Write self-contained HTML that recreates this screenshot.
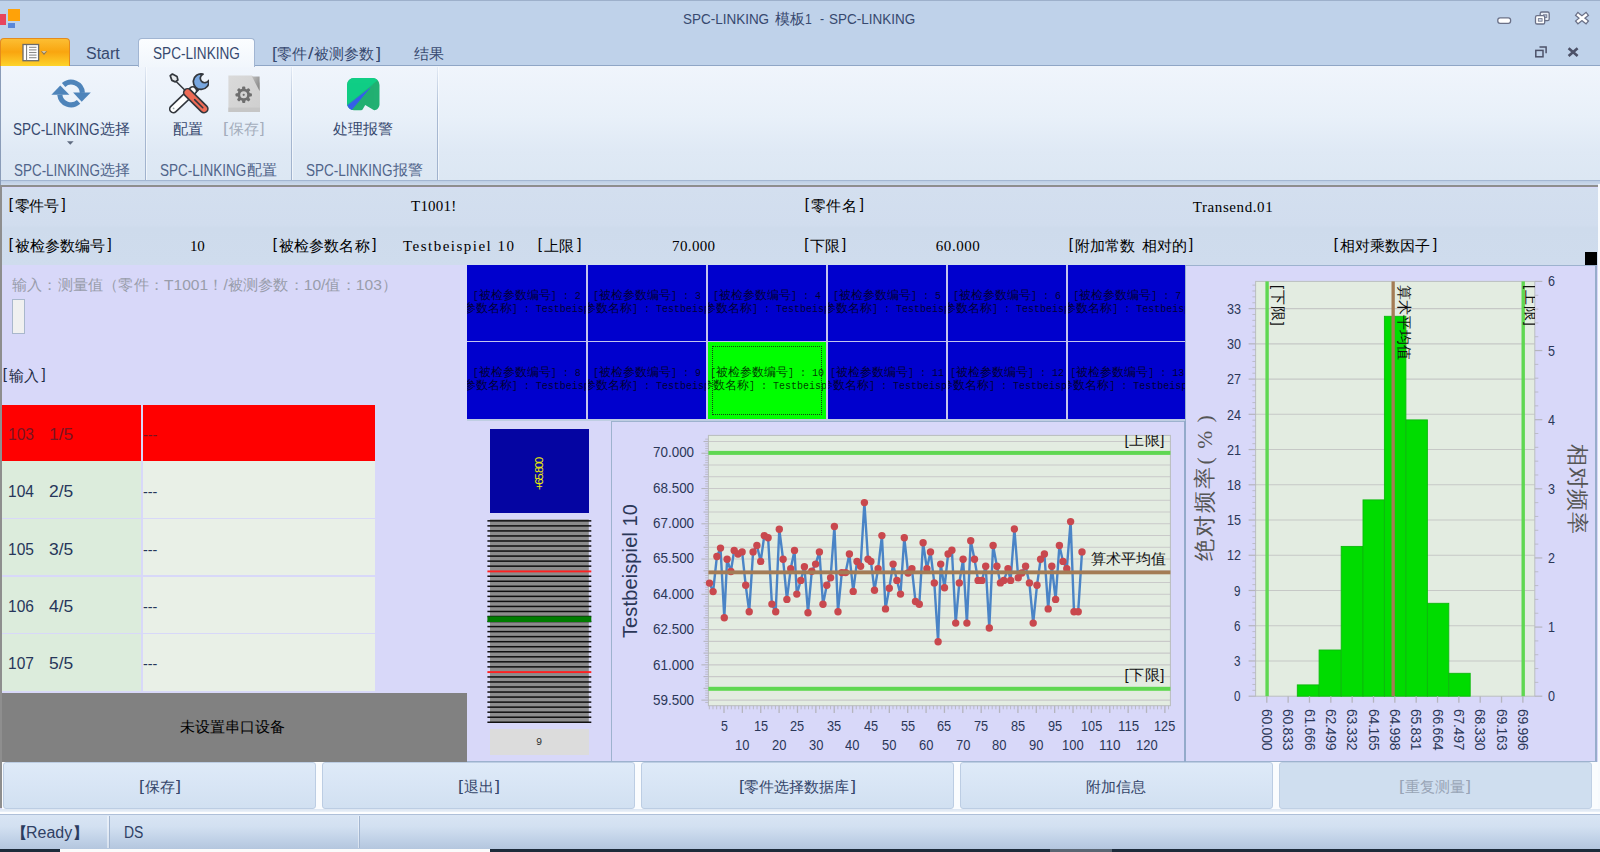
<!DOCTYPE html><html lang="zh"><head><meta charset="utf-8"><title>SPC-LINKING</title><style>
html,body{margin:0;padding:0}
body{width:1600px;height:852px;position:relative;overflow:hidden;background:#D8D8F9;font-family:"Liberation Sans",sans-serif}
.abs{position:absolute}
.t{position:absolute;white-space:nowrap;transform-origin:0 50%;display:block}
.b{position:absolute;box-sizing:border-box}
.cell{position:absolute;overflow:hidden;background:#0000CD;color:rgba(0,0,0,.78);font:10px/13.4px "Liberation Mono",monospace;text-align:center;white-space:nowrap}
.cell b{font-weight:normal;font-size:12px}
.cell div{position:absolute;left:-60px;right:-60px;text-align:center}
.btn{position:absolute;top:762.2px;height:46.9px;width:313px;box-sizing:border-box;border:1px solid #BCCDE3;border-radius:3px;background:linear-gradient(#DEEAF8,#D8E5F5 50%,#D1E0F1)}
.rot{position:absolute;white-space:nowrap;transform-origin:0 0}
</style></head><body>
<div class="b" style="left:0;top:0;width:1600px;height:66px;background:#BFD2EA;border-top:1px solid #9DB0CB"></div>
<div class="b" style="left:0;top:65px;width:1600px;height:116px;border-top:1px solid #8FA6C6;border-bottom:1px solid #A3B6D2;background:linear-gradient(#F0F5FC,#E8F0F9 45%,#DFE9F5 75%,#DCE7F3)"></div>
<div class="b" style="left:0;top:181px;width:1600px;height:5px;background:linear-gradient(#BCCDE4,#D2DEEE)"></div>
<div class="b" style="left:138px;top:38px;width:116.5px;height:28.5px;background:linear-gradient(#FBFDFF,#F1F6FC);border:1px solid #A1B5D2;border-bottom:none;border-radius:4px 4px 0 0"></div>
<div class="b" style="left:0.4px;top:37.6px;width:69.6px;height:28px;border:1.5px solid #E48B1D;border-bottom:none;border-radius:4px 4px 0 0;background:linear-gradient(#FCBE33,#F9A50F 48%,#FBB81C 70%,#FDD42B)"></div>
<svg class="abs" style="left:20px;top:42px" width="32" height="22" viewBox="0 0 32 22"><rect x="3" y="2.5" width="15.6" height="16.2" fill="#fff" stroke="#6A6A6A" stroke-width="1.3"/><line x1="6.6" x2="6.6" y1="3" y2="18.5" stroke="#777" stroke-width="1"/><g stroke="#8A8A8A" stroke-width="1.1"><line x1="9" x2="16.5" y1="5.3" y2="5.3"/><line x1="9" x2="16.5" y1="7.9" y2="7.9"/><line x1="9" x2="16.5" y1="10.5" y2="10.5"/><line x1="9" x2="16.5" y1="13.1" y2="13.1"/><line x1="9" x2="16.5" y1="15.7" y2="15.7"/></g><path d="M20.8 9.3h6.4l-3.2 3.6z" fill="#8C7A58"/><path d="M21.8 9.3h4.4l-2.2 1.6z" fill="#E9DFC9"/></svg>
<div class="b" style="left:7.7px;top:8.7px;width:12.4px;height:12.4px;background:#FFA208"></div><div class="b" style="left:0;top:14px;width:6.1px;height:10.7px;background:#E8455D"></div><div class="b" style="left:7.7px;top:22.6px;width:7.2px;height:5.8px;background:#5A87D8"></div>
<svg class="abs" style="left:1490px;top:8px" width="110" height="56" viewBox="1490 8 110 56">
<rect x="1497.8" y="17.8" width="12.8" height="5.6" rx="2.3" fill="#fff" stroke="#6A7087" stroke-width="1.3"/>
<rect x="1540.2" y="12" width="9" height="8.6" rx="1.6" fill="#E9EEF6" stroke="#6A7087" stroke-width="1.3"/><rect x="1543.4" y="14.8" width="3.4" height="2.6" fill="#B9C3D6" stroke="#6A7087" stroke-width=".8"/>
<rect x="1535.5" y="15.6" width="9.2" height="8.4" rx="1.6" fill="#fff" stroke="#6A7087" stroke-width="1.3"/><rect x="1538.3" y="18.6" width="3.8" height="2.6" fill="#C9D2E2" stroke="#6A7087" stroke-width=".8"/>
<path d="M1578.2 15.1l7.6 6.2M1585.8 15.1l-7.6 6.2" stroke="#6A7087" stroke-width="5" stroke-linecap="square"/><path d="M1578.2 15.1l7.6 6.2M1585.8 15.1l-7.6 6.2" stroke="#fff" stroke-width="2.5" stroke-linecap="square"/>
<rect x="1535.8" y="50.4" width="7.2" height="6.4" fill="none" stroke="#4C5168" stroke-width="1.5"/><path d="M1539.5 47h6.6v6.2" fill="none" stroke="#4C5168" stroke-width="1.5"/>
<path d="M1568.6 48.2l9 7.8M1577.6 48.2l-9 7.8" stroke="#4C5168" stroke-width="2.6"/>
</svg>
<div class="b" style="left:144.5px;top:67px;width:1px;height:113px;background:linear-gradient(rgba(160,178,205,.15),#A9BAD3 40%,#9FB1CC)"></div><div class="b" style="left:145.5px;top:67px;width:1px;height:113px;background:rgba(255,255,255,.55)"></div>
<div class="b" style="left:290.5px;top:67px;width:1px;height:113px;background:linear-gradient(rgba(160,178,205,.15),#A9BAD3 40%,#9FB1CC)"></div><div class="b" style="left:291.5px;top:67px;width:1px;height:113px;background:rgba(255,255,255,.55)"></div>
<div class="b" style="left:437px;top:67px;width:1px;height:113px;background:linear-gradient(rgba(160,178,205,.15),#A9BAD3 40%,#9FB1CC)"></div><div class="b" style="left:438px;top:67px;width:1px;height:113px;background:rgba(255,255,255,.55)"></div>
<svg class="abs" style="left:51px;top:79px" width="40.5" height="29" viewBox="0 0 40.5 29">
<path d="M12.6 6.0A11.3 11.3 0 0 1 31.4 13.9" fill="none" stroke="#4E84BA" stroke-width="5.1"/>
<path d="M22.1 13.4H39.8L30.7 22.8z" fill="#4E84BA"/>
<path d="M9.25 6.4L0.4 15.7H18.4z" fill="#4E84BA"/>
<path d="M8.8 15.7A11.3 11.3 0 0 0 27.6 22.9" fill="none" stroke="#4E84BA" stroke-width="5.1"/>
</svg>
<svg class="abs" style="left:66px;top:140px" width="9" height="6" viewBox="0 0 9 6"><path d="M1 1.2h6.6L4.3 4.8z" fill="#5F6B80"/></svg>
<svg class="abs" style="left:168.6px;top:73.3px" width="40.5" height="41" viewBox="0 0 40.5 41">
<g stroke="#33373D" stroke-width="1.7" stroke-linejoin="round" stroke-linecap="round">
<line x1="6.4" y1="7.8" x2="16" y2="17.2" stroke-width="1.6"/>
<path d="M1.2 2.6L3.4 1l4.6 2.4 .9 3.6-2.6 1.9L2.9 7.4z" fill="#E8ECEF"/>
<path d="M26.2 14.4l-2.6 3.2 2.6 2.4 3-2.8z" fill="#fff"/>
<path d="M23.8 17.6L4.4 36" stroke-width="9"/>
<path d="M23.8 17.6L4.4 36" stroke="#FFFFFF" stroke-width="5.7"/>
<path d="M34 1.1A7.8 7.8 0 1 0 39.8 7.3A4.5 4.5 0 1 1 34 1.1z" fill="#78A7E0"/>
<path d="M18.6 19.6L35 35.8" stroke-width="9.4"/>
<path d="M18.6 19.6L35 35.8" stroke="#EE6B56" stroke-width="6.1"/>
<path d="M25.6 26.6l8.2 8.2" stroke-width="1.5"/>
</g><circle cx="4.6" cy="35.4" r="0.9" fill="#9AA"/></svg>
<svg class="abs" style="left:227.5px;top:74.6px" width="32.5" height="37.5" viewBox="0 0 32.5 37.5">
<defs><linearGradient id="sg" x1="0" y1="0" x2="1" y2="1"><stop offset="0" stop-color="#DADADA"/><stop offset="1" stop-color="#CFCFCF"/></linearGradient><linearGradient id="sf" x1="0" y1="0" x2="1" y2="1"><stop offset="0" stop-color="#BDBDBD"/><stop offset="1" stop-color="#808080"/></linearGradient></defs>
<path d="M.4 .4H24l8 7.6V37H.4z" fill="url(#sg)"/>
<path d="M24 1.6l7.6 0 0 14.4z" fill="url(#sf)"/>
<rect x=".4" y="32.6" width="31.6" height="4.4" fill="#C6C6C6"/>
<g fill="#6E6E6E"><circle cx="15.7" cy="19.8" r="6.2"/>
<g id="tt"><rect x="14.1" y="11.6" width="3.2" height="16.4" rx="1"/></g>
<use href="#tt" transform="rotate(45 15.7 19.8)"/><use href="#tt" transform="rotate(90 15.7 19.8)"/><use href="#tt" transform="rotate(135 15.7 19.8)"/></g>
<circle cx="15.7" cy="19.8" r="3.5" fill="#D2D2D2"/><circle cx="15.7" cy="19.8" r="1.1" fill="#6E6E6E"/>
</svg>
<svg class="abs" style="left:347.4px;top:77.5px" width="33" height="33" viewBox="0 0 33 33">
<defs><clipPath id="gc"><path d="M7 0H25.5a7 7 0 0 1 7 7V26.5c0 3-2.6 5.9-5.4 5.7L18.2 27 15.6 31.6c-.3 .5-.8 .7-1.5 .7H7a7 7 0 0 1-7-7V7a7 7 0 0 1 7-7z"/></clipPath></defs>
<g clip-path="url(#gc)"><rect width="33" height="33" fill="#22B072"/><path d="M0 0H33L30.2 2.4 0.2 27.2z" fill="#10CE85"/><path d="M-0.4 27.4L24.2 8.8 4.6 32.2 0 33z" fill="#3560E8"/><path d="M0 27.2L26 6.4" stroke="#17BF83" stroke-width="1.2" opacity=".6"/></g></svg>
<div class="b" style="left:0;top:185.4px;width:1597.8px;height:2.1px;background:#8E8E8E"></div>
<div class="b" style="left:0;top:185.4px;width:2.4px;height:623px;background:#8E8E8E"></div>
<div class="b" style="left:0;top:66px;width:1px;height:119px;background:#8A9CB8"></div>
<div class="b" style="left:1597.8px;top:184px;width:2.2px;height:630px;background:#F7FAFD"></div>
<div class="b" style="left:2.4px;top:187.5px;width:1595.4px;height:77.6px;background:linear-gradient(#D3DFEF,#D1DDEE 48%,#CEDBEC 52%,#CFDCED)"></div>
<div class="b" style="left:1585.2px;top:252.4px;width:12.3px;height:12.4px;background:#000"></div>
<div class="b" style="left:12.4px;top:299px;width:12.8px;height:34.6px;background:#F0F0F0;border:1px solid #A9B7CC"></div>
<div class="b" style="left:2.4px;top:404.8px;width:138.3px;height:56.5px;background:#FF0000"></div><div class="b" style="left:142.5px;top:404.8px;width:232.7px;height:56.5px;background:#FF0000"></div>
<div class="b" style="left:2.4px;top:461.3px;width:138.3px;height:56.7px;background:#DCECDC"></div><div class="b" style="left:142.5px;top:461.3px;width:232.7px;height:56.7px;background:#E9F0E7"></div>
<div class="b" style="left:2.4px;top:519.4px;width:138.3px;height:55.9px;background:#DCECDC"></div><div class="b" style="left:142.5px;top:519.4px;width:232.7px;height:55.9px;background:#E9F0E7"></div>
<div class="b" style="left:2.4px;top:576.7px;width:138.3px;height:55.9px;background:#DCECDC"></div><div class="b" style="left:142.5px;top:576.7px;width:232.7px;height:55.9px;background:#E9F0E7"></div>
<div class="b" style="left:2.4px;top:634px;width:138.3px;height:57.4px;background:#DCECDC"></div><div class="b" style="left:142.5px;top:634px;width:232.7px;height:57.4px;background:#E9F0E7"></div>
<div class="b" style="left:2.4px;top:693px;width:464.8px;height:69px;background:#818181"></div>
<div class="b" style="left:467.2px;top:265px;width:719.8px;height:153.7px;background:#C4C4EE"></div>
<div class="cell" style="left:467.1px;top:265.0px;width:119.2px;height:75.8px;background:#0000CD"><div style="top:24.7px">[<b>被检参数编号</b>] : 2</div><div style="top:38.3px">[<b>被检参数名称</b>] : Testbeispiel 2</div></div>
<div class="cell" style="left:587.6px;top:265.0px;width:118.7px;height:75.8px;background:#0000CD"><div style="top:24.7px">[<b>被检参数编号</b>] : 3</div><div style="top:38.3px">[<b>被检参数名称</b>] : Testbeispiel 3</div></div>
<div class="cell" style="left:707.6px;top:265.0px;width:118.7px;height:75.8px;background:#0000CD"><div style="top:24.7px">[<b>被检参数编号</b>] : 4</div><div style="top:38.3px">[<b>被检参数名称</b>] : Testbeispiel 4</div></div>
<div class="cell" style="left:827.6px;top:265.0px;width:118.7px;height:75.8px;background:#0000CD"><div style="top:24.7px">[<b>被检参数编号</b>] : 5</div><div style="top:38.3px">[<b>被检参数名称</b>] : Testbeispiel 5</div></div>
<div class="cell" style="left:947.6px;top:265.0px;width:118.7px;height:75.8px;background:#0000CD"><div style="top:24.7px">[<b>被检参数编号</b>] : 6</div><div style="top:38.3px">[<b>被检参数名称</b>] : Testbeispiel 6</div></div>
<div class="cell" style="left:1067.6px;top:265.0px;width:119.4px;height:75.8px;background:#0000CD"><div style="top:24.7px">[<b>被检参数编号</b>] : 7</div><div style="top:38.3px">[<b>被检参数名称</b>] : Testbeispiel 7</div></div>
<div class="cell" style="left:467.1px;top:342.1px;width:119.2px;height:76.6px;background:#0000CD"><div style="top:24.8px">[<b>被检参数编号</b>] : 8</div><div style="top:38.0px">[<b>被检参数名称</b>] : Testbeispiel 8</div></div>
<div class="cell" style="left:587.6px;top:342.1px;width:118.7px;height:76.6px;background:#0000CD"><div style="top:24.8px">[<b>被检参数编号</b>] : 9</div><div style="top:38.0px">[<b>被检参数名称</b>] : Testbeispiel 9</div></div>
<div class="cell" style="left:707.6px;top:342.1px;width:118.7px;height:76.6px;background:#00FF00"><div style="top:24.8px">[<b>被检参数编号</b>] : 10</div><div style="top:38.0px">[<b>被检参数名称</b>] : Testbeispiel 10</div><div style="left:4px;right:4px;top:4px;bottom:4px;border:1px dotted #1a3a1a"></div></div>
<div class="cell" style="left:827.6px;top:342.1px;width:118.7px;height:76.6px;background:#0000CD"><div style="top:24.8px">[<b>被检参数编号</b>] : 11</div><div style="top:38.0px">[<b>被检参数名称</b>] : Testbeispiel 11</div></div>
<div class="cell" style="left:947.6px;top:342.1px;width:118.7px;height:76.6px;background:#0000CD"><div style="top:24.8px">[<b>被检参数编号</b>] : 12</div><div style="top:38.0px">[<b>被检参数名称</b>] : Testbeispiel 12</div></div>
<div class="cell" style="left:1067.6px;top:342.1px;width:119.4px;height:76.6px;background:#0000CD"><div style="top:24.8px">[<b>被检参数编号</b>] : 13</div><div style="top:38.0px">[<b>被检参数名称</b>] : Testbeispiel 13</div></div>
<div class="b" style="left:490px;top:428.6px;width:98.8px;height:84.6px;background:#0505A2"></div>
<div class="rot" style="left:531.6px;top:490.4px;transform:rotate(-90deg);font:11.5px/14px 'Liberation Sans',sans-serif;color:#F2F200;letter-spacing:-1.45px">+65.800</div>
<svg class="abs" style="left:0;top:0" width="1600" height="852" viewBox="0 0 1600 852">
<rect x="490" y="519.4" width="98.8" height="203.6" fill="#8C8C8C"/>
<rect x="487.4" y="520.10" width="103.9" height="1.5" fill="#101010"/>
<rect x="487.4" y="525.13" width="103.9" height="1.5" fill="#101010"/>
<rect x="487.4" y="530.17" width="103.9" height="1.5" fill="#101010"/>
<rect x="487.4" y="535.21" width="103.9" height="1.5" fill="#101010"/>
<rect x="487.4" y="540.24" width="103.9" height="1.5" fill="#101010"/>
<rect x="487.4" y="545.27" width="103.9" height="1.5" fill="#101010"/>
<rect x="487.4" y="550.31" width="103.9" height="1.5" fill="#101010"/>
<rect x="487.4" y="555.35" width="103.9" height="1.5" fill="#101010"/>
<rect x="487.4" y="560.38" width="103.9" height="1.5" fill="#101010"/>
<rect x="487.4" y="565.41" width="103.9" height="1.5" fill="#101010"/>
<rect x="487.4" y="570.45" width="103.9" height="1.9" fill="#FF2020"/>
<rect x="487.4" y="575.49" width="103.9" height="1.5" fill="#101010"/>
<rect x="487.4" y="580.52" width="103.9" height="1.5" fill="#101010"/>
<rect x="487.4" y="585.56" width="103.9" height="1.5" fill="#101010"/>
<rect x="487.4" y="590.59" width="103.9" height="1.5" fill="#101010"/>
<rect x="487.4" y="595.62" width="103.9" height="1.5" fill="#101010"/>
<rect x="487.4" y="600.66" width="103.9" height="1.5" fill="#101010"/>
<rect x="487.4" y="605.70" width="103.9" height="1.5" fill="#101010"/>
<rect x="487.4" y="610.73" width="103.9" height="1.5" fill="#101010"/>
<rect x="487.4" y="615.76" width="103.9" height="1.5" fill="#101010"/>
<rect x="487.4" y="620.80" width="103.9" height="1.5" fill="#101010"/>
<rect x="487.4" y="625.84" width="103.9" height="1.5" fill="#101010"/>
<rect x="487.4" y="630.87" width="103.9" height="1.5" fill="#101010"/>
<rect x="487.4" y="635.90" width="103.9" height="1.5" fill="#101010"/>
<rect x="487.4" y="640.94" width="103.9" height="1.5" fill="#101010"/>
<rect x="487.4" y="645.98" width="103.9" height="1.5" fill="#101010"/>
<rect x="487.4" y="651.01" width="103.9" height="1.5" fill="#101010"/>
<rect x="487.4" y="656.05" width="103.9" height="1.5" fill="#101010"/>
<rect x="487.4" y="661.08" width="103.9" height="1.5" fill="#101010"/>
<rect x="487.4" y="666.12" width="103.9" height="1.5" fill="#101010"/>
<rect x="487.4" y="671.15" width="103.9" height="1.9" fill="#FF2020"/>
<rect x="487.4" y="676.19" width="103.9" height="1.5" fill="#101010"/>
<rect x="487.4" y="681.22" width="103.9" height="1.5" fill="#101010"/>
<rect x="487.4" y="686.25" width="103.9" height="1.5" fill="#101010"/>
<rect x="487.4" y="691.29" width="103.9" height="1.5" fill="#101010"/>
<rect x="487.4" y="696.33" width="103.9" height="1.5" fill="#101010"/>
<rect x="487.4" y="701.36" width="103.9" height="1.5" fill="#101010"/>
<rect x="487.4" y="706.39" width="103.9" height="1.5" fill="#101010"/>
<rect x="487.4" y="711.43" width="103.9" height="1.5" fill="#101010"/>
<rect x="487.4" y="716.47" width="103.9" height="1.5" fill="#101010"/>
<rect x="487.4" y="721.50" width="103.9" height="1.5" fill="#101010"/>
<rect x="487.4" y="616.4" width="103.9" height="5.6" fill="#007C00"/>
</svg>
<div class="b" style="left:490px;top:729.4px;width:98.8px;height:25.8px;background:#DCDCDC"></div>
<div class="b" style="left:467.2px;top:418.7px;width:719.8px;height:2.4px;background:#BFCEE2"></div><div class="b" style="left:467.2px;top:760.7px;width:1129.4px;height:1.6px;background:#9DB2CE"></div><div class="b" style="left:611px;top:421px;width:574.9px;height:341.3px;border:1.6px solid #9DB2CE"></div>
<svg class="abs" style="left:0;top:0" width="1600" height="852" viewBox="0 0 1600 852">
<rect x="708.4" y="435.4" width="462" height="270.3" fill="#E3ECE1"/>
<line x1="708.4" x2="1170.4" y1="441.50" y2="441.50" stroke="#C9C9C9" stroke-width="1.1"/>
<line x1="708.4" x2="1170.4" y1="453.26" y2="453.26" stroke="#C9C9C9" stroke-width="1.1"/>
<line x1="708.4" x2="1170.4" y1="465.01" y2="465.01" stroke="#C9C9C9" stroke-width="1.1"/>
<line x1="708.4" x2="1170.4" y1="476.77" y2="476.77" stroke="#C9C9C9" stroke-width="1.1"/>
<line x1="708.4" x2="1170.4" y1="488.52" y2="488.52" stroke="#C9C9C9" stroke-width="1.1"/>
<line x1="708.4" x2="1170.4" y1="500.28" y2="500.28" stroke="#C9C9C9" stroke-width="1.1"/>
<line x1="708.4" x2="1170.4" y1="512.03" y2="512.03" stroke="#C9C9C9" stroke-width="1.1"/>
<line x1="708.4" x2="1170.4" y1="523.79" y2="523.79" stroke="#C9C9C9" stroke-width="1.1"/>
<line x1="708.4" x2="1170.4" y1="535.54" y2="535.54" stroke="#C9C9C9" stroke-width="1.1"/>
<line x1="708.4" x2="1170.4" y1="547.30" y2="547.30" stroke="#C9C9C9" stroke-width="1.1"/>
<line x1="708.4" x2="1170.4" y1="559.05" y2="559.05" stroke="#C9C9C9" stroke-width="1.1"/>
<line x1="708.4" x2="1170.4" y1="570.81" y2="570.81" stroke="#C9C9C9" stroke-width="1.1"/>
<line x1="708.4" x2="1170.4" y1="582.57" y2="582.57" stroke="#C9C9C9" stroke-width="1.1"/>
<line x1="708.4" x2="1170.4" y1="594.32" y2="594.32" stroke="#C9C9C9" stroke-width="1.1"/>
<line x1="708.4" x2="1170.4" y1="606.08" y2="606.08" stroke="#C9C9C9" stroke-width="1.1"/>
<line x1="708.4" x2="1170.4" y1="617.83" y2="617.83" stroke="#C9C9C9" stroke-width="1.1"/>
<line x1="708.4" x2="1170.4" y1="629.59" y2="629.59" stroke="#C9C9C9" stroke-width="1.1"/>
<line x1="708.4" x2="1170.4" y1="641.34" y2="641.34" stroke="#C9C9C9" stroke-width="1.1"/>
<line x1="708.4" x2="1170.4" y1="653.10" y2="653.10" stroke="#C9C9C9" stroke-width="1.1"/>
<line x1="708.4" x2="1170.4" y1="664.85" y2="664.85" stroke="#C9C9C9" stroke-width="1.1"/>
<line x1="708.4" x2="1170.4" y1="676.61" y2="676.61" stroke="#C9C9C9" stroke-width="1.1"/>
<line x1="708.4" x2="1170.4" y1="688.36" y2="688.36" stroke="#C9C9C9" stroke-width="1.1"/>
<line x1="708.4" x2="1170.4" y1="700.12" y2="700.12" stroke="#C9C9C9" stroke-width="1.1"/>
<rect x="708.4" y="435.4" width="462" height="270.3" fill="none" stroke="#B9BDBD" stroke-width="1"/>
<line x1="705.2" x2="708.4" y1="439.15" y2="439.15" stroke="#B5B5BD" stroke-width="0.8"/>
<line x1="703.5" x2="708.4" y1="441.50" y2="441.50" stroke="#B5B5BD" stroke-width="1.1"/>
<line x1="705.2" x2="708.4" y1="443.86" y2="443.86" stroke="#B5B5BD" stroke-width="0.8"/>
<line x1="705.2" x2="708.4" y1="446.21" y2="446.21" stroke="#B5B5BD" stroke-width="0.8"/>
<line x1="705.2" x2="708.4" y1="448.56" y2="448.56" stroke="#B5B5BD" stroke-width="0.8"/>
<line x1="705.2" x2="708.4" y1="450.91" y2="450.91" stroke="#B5B5BD" stroke-width="0.8"/>
<line x1="701.4" x2="708.4" y1="453.26" y2="453.26" stroke="#B5B5BD" stroke-width="1.1"/>
<line x1="705.2" x2="708.4" y1="455.61" y2="455.61" stroke="#B5B5BD" stroke-width="0.8"/>
<line x1="705.2" x2="708.4" y1="457.96" y2="457.96" stroke="#B5B5BD" stroke-width="0.8"/>
<line x1="705.2" x2="708.4" y1="460.31" y2="460.31" stroke="#B5B5BD" stroke-width="0.8"/>
<line x1="705.2" x2="708.4" y1="462.66" y2="462.66" stroke="#B5B5BD" stroke-width="0.8"/>
<line x1="703.5" x2="708.4" y1="465.01" y2="465.01" stroke="#B5B5BD" stroke-width="1.1"/>
<line x1="705.2" x2="708.4" y1="467.37" y2="467.37" stroke="#B5B5BD" stroke-width="0.8"/>
<line x1="705.2" x2="708.4" y1="469.72" y2="469.72" stroke="#B5B5BD" stroke-width="0.8"/>
<line x1="705.2" x2="708.4" y1="472.07" y2="472.07" stroke="#B5B5BD" stroke-width="0.8"/>
<line x1="705.2" x2="708.4" y1="474.42" y2="474.42" stroke="#B5B5BD" stroke-width="0.8"/>
<line x1="703.5" x2="708.4" y1="476.77" y2="476.77" stroke="#B5B5BD" stroke-width="1.1"/>
<line x1="705.2" x2="708.4" y1="479.12" y2="479.12" stroke="#B5B5BD" stroke-width="0.8"/>
<line x1="705.2" x2="708.4" y1="481.47" y2="481.47" stroke="#B5B5BD" stroke-width="0.8"/>
<line x1="705.2" x2="708.4" y1="483.82" y2="483.82" stroke="#B5B5BD" stroke-width="0.8"/>
<line x1="705.2" x2="708.4" y1="486.17" y2="486.17" stroke="#B5B5BD" stroke-width="0.8"/>
<line x1="701.4" x2="708.4" y1="488.52" y2="488.52" stroke="#B5B5BD" stroke-width="1.1"/>
<line x1="705.2" x2="708.4" y1="490.88" y2="490.88" stroke="#B5B5BD" stroke-width="0.8"/>
<line x1="705.2" x2="708.4" y1="493.23" y2="493.23" stroke="#B5B5BD" stroke-width="0.8"/>
<line x1="705.2" x2="708.4" y1="495.58" y2="495.58" stroke="#B5B5BD" stroke-width="0.8"/>
<line x1="705.2" x2="708.4" y1="497.93" y2="497.93" stroke="#B5B5BD" stroke-width="0.8"/>
<line x1="703.5" x2="708.4" y1="500.28" y2="500.28" stroke="#B5B5BD" stroke-width="1.1"/>
<line x1="705.2" x2="708.4" y1="502.63" y2="502.63" stroke="#B5B5BD" stroke-width="0.8"/>
<line x1="705.2" x2="708.4" y1="504.98" y2="504.98" stroke="#B5B5BD" stroke-width="0.8"/>
<line x1="705.2" x2="708.4" y1="507.33" y2="507.33" stroke="#B5B5BD" stroke-width="0.8"/>
<line x1="705.2" x2="708.4" y1="509.68" y2="509.68" stroke="#B5B5BD" stroke-width="0.8"/>
<line x1="703.5" x2="708.4" y1="512.03" y2="512.03" stroke="#B5B5BD" stroke-width="1.1"/>
<line x1="705.2" x2="708.4" y1="514.39" y2="514.39" stroke="#B5B5BD" stroke-width="0.8"/>
<line x1="705.2" x2="708.4" y1="516.74" y2="516.74" stroke="#B5B5BD" stroke-width="0.8"/>
<line x1="705.2" x2="708.4" y1="519.09" y2="519.09" stroke="#B5B5BD" stroke-width="0.8"/>
<line x1="705.2" x2="708.4" y1="521.44" y2="521.44" stroke="#B5B5BD" stroke-width="0.8"/>
<line x1="701.4" x2="708.4" y1="523.79" y2="523.79" stroke="#B5B5BD" stroke-width="1.1"/>
<line x1="705.2" x2="708.4" y1="526.14" y2="526.14" stroke="#B5B5BD" stroke-width="0.8"/>
<line x1="705.2" x2="708.4" y1="528.49" y2="528.49" stroke="#B5B5BD" stroke-width="0.8"/>
<line x1="705.2" x2="708.4" y1="530.84" y2="530.84" stroke="#B5B5BD" stroke-width="0.8"/>
<line x1="705.2" x2="708.4" y1="533.19" y2="533.19" stroke="#B5B5BD" stroke-width="0.8"/>
<line x1="703.5" x2="708.4" y1="535.54" y2="535.54" stroke="#B5B5BD" stroke-width="1.1"/>
<line x1="705.2" x2="708.4" y1="537.90" y2="537.90" stroke="#B5B5BD" stroke-width="0.8"/>
<line x1="705.2" x2="708.4" y1="540.25" y2="540.25" stroke="#B5B5BD" stroke-width="0.8"/>
<line x1="705.2" x2="708.4" y1="542.60" y2="542.60" stroke="#B5B5BD" stroke-width="0.8"/>
<line x1="705.2" x2="708.4" y1="544.95" y2="544.95" stroke="#B5B5BD" stroke-width="0.8"/>
<line x1="703.5" x2="708.4" y1="547.30" y2="547.30" stroke="#B5B5BD" stroke-width="1.1"/>
<line x1="705.2" x2="708.4" y1="549.65" y2="549.65" stroke="#B5B5BD" stroke-width="0.8"/>
<line x1="705.2" x2="708.4" y1="552.00" y2="552.00" stroke="#B5B5BD" stroke-width="0.8"/>
<line x1="705.2" x2="708.4" y1="554.35" y2="554.35" stroke="#B5B5BD" stroke-width="0.8"/>
<line x1="705.2" x2="708.4" y1="556.70" y2="556.70" stroke="#B5B5BD" stroke-width="0.8"/>
<line x1="701.4" x2="708.4" y1="559.05" y2="559.05" stroke="#B5B5BD" stroke-width="1.1"/>
<line x1="705.2" x2="708.4" y1="561.41" y2="561.41" stroke="#B5B5BD" stroke-width="0.8"/>
<line x1="705.2" x2="708.4" y1="563.76" y2="563.76" stroke="#B5B5BD" stroke-width="0.8"/>
<line x1="705.2" x2="708.4" y1="566.11" y2="566.11" stroke="#B5B5BD" stroke-width="0.8"/>
<line x1="705.2" x2="708.4" y1="568.46" y2="568.46" stroke="#B5B5BD" stroke-width="0.8"/>
<line x1="703.5" x2="708.4" y1="570.81" y2="570.81" stroke="#B5B5BD" stroke-width="1.1"/>
<line x1="705.2" x2="708.4" y1="573.16" y2="573.16" stroke="#B5B5BD" stroke-width="0.8"/>
<line x1="705.2" x2="708.4" y1="575.51" y2="575.51" stroke="#B5B5BD" stroke-width="0.8"/>
<line x1="705.2" x2="708.4" y1="577.86" y2="577.86" stroke="#B5B5BD" stroke-width="0.8"/>
<line x1="705.2" x2="708.4" y1="580.21" y2="580.21" stroke="#B5B5BD" stroke-width="0.8"/>
<line x1="703.5" x2="708.4" y1="582.57" y2="582.57" stroke="#B5B5BD" stroke-width="1.1"/>
<line x1="705.2" x2="708.4" y1="584.92" y2="584.92" stroke="#B5B5BD" stroke-width="0.8"/>
<line x1="705.2" x2="708.4" y1="587.27" y2="587.27" stroke="#B5B5BD" stroke-width="0.8"/>
<line x1="705.2" x2="708.4" y1="589.62" y2="589.62" stroke="#B5B5BD" stroke-width="0.8"/>
<line x1="705.2" x2="708.4" y1="591.97" y2="591.97" stroke="#B5B5BD" stroke-width="0.8"/>
<line x1="701.4" x2="708.4" y1="594.32" y2="594.32" stroke="#B5B5BD" stroke-width="1.1"/>
<line x1="705.2" x2="708.4" y1="596.67" y2="596.67" stroke="#B5B5BD" stroke-width="0.8"/>
<line x1="705.2" x2="708.4" y1="599.02" y2="599.02" stroke="#B5B5BD" stroke-width="0.8"/>
<line x1="705.2" x2="708.4" y1="601.37" y2="601.37" stroke="#B5B5BD" stroke-width="0.8"/>
<line x1="705.2" x2="708.4" y1="603.72" y2="603.72" stroke="#B5B5BD" stroke-width="0.8"/>
<line x1="703.5" x2="708.4" y1="606.08" y2="606.08" stroke="#B5B5BD" stroke-width="1.1"/>
<line x1="705.2" x2="708.4" y1="608.43" y2="608.43" stroke="#B5B5BD" stroke-width="0.8"/>
<line x1="705.2" x2="708.4" y1="610.78" y2="610.78" stroke="#B5B5BD" stroke-width="0.8"/>
<line x1="705.2" x2="708.4" y1="613.13" y2="613.13" stroke="#B5B5BD" stroke-width="0.8"/>
<line x1="705.2" x2="708.4" y1="615.48" y2="615.48" stroke="#B5B5BD" stroke-width="0.8"/>
<line x1="703.5" x2="708.4" y1="617.83" y2="617.83" stroke="#B5B5BD" stroke-width="1.1"/>
<line x1="705.2" x2="708.4" y1="620.18" y2="620.18" stroke="#B5B5BD" stroke-width="0.8"/>
<line x1="705.2" x2="708.4" y1="622.53" y2="622.53" stroke="#B5B5BD" stroke-width="0.8"/>
<line x1="705.2" x2="708.4" y1="624.88" y2="624.88" stroke="#B5B5BD" stroke-width="0.8"/>
<line x1="705.2" x2="708.4" y1="627.23" y2="627.23" stroke="#B5B5BD" stroke-width="0.8"/>
<line x1="701.4" x2="708.4" y1="629.59" y2="629.59" stroke="#B5B5BD" stroke-width="1.1"/>
<line x1="705.2" x2="708.4" y1="631.94" y2="631.94" stroke="#B5B5BD" stroke-width="0.8"/>
<line x1="705.2" x2="708.4" y1="634.29" y2="634.29" stroke="#B5B5BD" stroke-width="0.8"/>
<line x1="705.2" x2="708.4" y1="636.64" y2="636.64" stroke="#B5B5BD" stroke-width="0.8"/>
<line x1="705.2" x2="708.4" y1="638.99" y2="638.99" stroke="#B5B5BD" stroke-width="0.8"/>
<line x1="703.5" x2="708.4" y1="641.34" y2="641.34" stroke="#B5B5BD" stroke-width="1.1"/>
<line x1="705.2" x2="708.4" y1="643.69" y2="643.69" stroke="#B5B5BD" stroke-width="0.8"/>
<line x1="705.2" x2="708.4" y1="646.04" y2="646.04" stroke="#B5B5BD" stroke-width="0.8"/>
<line x1="705.2" x2="708.4" y1="648.39" y2="648.39" stroke="#B5B5BD" stroke-width="0.8"/>
<line x1="705.2" x2="708.4" y1="650.74" y2="650.74" stroke="#B5B5BD" stroke-width="0.8"/>
<line x1="703.5" x2="708.4" y1="653.10" y2="653.10" stroke="#B5B5BD" stroke-width="1.1"/>
<line x1="705.2" x2="708.4" y1="655.45" y2="655.45" stroke="#B5B5BD" stroke-width="0.8"/>
<line x1="705.2" x2="708.4" y1="657.80" y2="657.80" stroke="#B5B5BD" stroke-width="0.8"/>
<line x1="705.2" x2="708.4" y1="660.15" y2="660.15" stroke="#B5B5BD" stroke-width="0.8"/>
<line x1="705.2" x2="708.4" y1="662.50" y2="662.50" stroke="#B5B5BD" stroke-width="0.8"/>
<line x1="701.4" x2="708.4" y1="664.85" y2="664.85" stroke="#B5B5BD" stroke-width="1.1"/>
<line x1="705.2" x2="708.4" y1="667.20" y2="667.20" stroke="#B5B5BD" stroke-width="0.8"/>
<line x1="705.2" x2="708.4" y1="669.55" y2="669.55" stroke="#B5B5BD" stroke-width="0.8"/>
<line x1="705.2" x2="708.4" y1="671.90" y2="671.90" stroke="#B5B5BD" stroke-width="0.8"/>
<line x1="705.2" x2="708.4" y1="674.25" y2="674.25" stroke="#B5B5BD" stroke-width="0.8"/>
<line x1="703.5" x2="708.4" y1="676.61" y2="676.61" stroke="#B5B5BD" stroke-width="1.1"/>
<line x1="705.2" x2="708.4" y1="678.96" y2="678.96" stroke="#B5B5BD" stroke-width="0.8"/>
<line x1="705.2" x2="708.4" y1="681.31" y2="681.31" stroke="#B5B5BD" stroke-width="0.8"/>
<line x1="705.2" x2="708.4" y1="683.66" y2="683.66" stroke="#B5B5BD" stroke-width="0.8"/>
<line x1="705.2" x2="708.4" y1="686.01" y2="686.01" stroke="#B5B5BD" stroke-width="0.8"/>
<line x1="703.5" x2="708.4" y1="688.36" y2="688.36" stroke="#B5B5BD" stroke-width="1.1"/>
<line x1="705.2" x2="708.4" y1="690.71" y2="690.71" stroke="#B5B5BD" stroke-width="0.8"/>
<line x1="705.2" x2="708.4" y1="693.06" y2="693.06" stroke="#B5B5BD" stroke-width="0.8"/>
<line x1="705.2" x2="708.4" y1="695.41" y2="695.41" stroke="#B5B5BD" stroke-width="0.8"/>
<line x1="705.2" x2="708.4" y1="697.76" y2="697.76" stroke="#B5B5BD" stroke-width="0.8"/>
<line x1="701.4" x2="708.4" y1="700.12" y2="700.12" stroke="#B5B5BD" stroke-width="1.1"/>
<line x1="705.2" x2="708.4" y1="702.47" y2="702.47" stroke="#B5B5BD" stroke-width="0.8"/>
<line x1="709.30" x2="709.30" y1="705.7" y2="709.3" stroke="#B5B5BD" stroke-width="0.9"/>
<line x1="712.98" x2="712.98" y1="705.7" y2="709.3" stroke="#B5B5BD" stroke-width="0.9"/>
<line x1="716.65" x2="716.65" y1="705.7" y2="709.3" stroke="#B5B5BD" stroke-width="0.9"/>
<line x1="720.33" x2="720.33" y1="705.7" y2="709.3" stroke="#B5B5BD" stroke-width="0.9"/>
<line x1="724.00" x2="724.00" y1="705.7" y2="712.9" stroke="#B5B5BD" stroke-width="1.3"/>
<line x1="727.67" x2="727.67" y1="705.7" y2="709.3" stroke="#B5B5BD" stroke-width="0.9"/>
<line x1="731.35" x2="731.35" y1="705.7" y2="709.3" stroke="#B5B5BD" stroke-width="0.9"/>
<line x1="735.02" x2="735.02" y1="705.7" y2="709.3" stroke="#B5B5BD" stroke-width="0.9"/>
<line x1="738.70" x2="738.70" y1="705.7" y2="709.3" stroke="#B5B5BD" stroke-width="0.9"/>
<line x1="742.37" x2="742.37" y1="705.7" y2="712.9" stroke="#B5B5BD" stroke-width="1.3"/>
<line x1="746.04" x2="746.04" y1="705.7" y2="709.3" stroke="#B5B5BD" stroke-width="0.9"/>
<line x1="749.72" x2="749.72" y1="705.7" y2="709.3" stroke="#B5B5BD" stroke-width="0.9"/>
<line x1="753.39" x2="753.39" y1="705.7" y2="709.3" stroke="#B5B5BD" stroke-width="0.9"/>
<line x1="757.07" x2="757.07" y1="705.7" y2="709.3" stroke="#B5B5BD" stroke-width="0.9"/>
<line x1="760.74" x2="760.74" y1="705.7" y2="712.9" stroke="#B5B5BD" stroke-width="1.3"/>
<line x1="764.41" x2="764.41" y1="705.7" y2="709.3" stroke="#B5B5BD" stroke-width="0.9"/>
<line x1="768.09" x2="768.09" y1="705.7" y2="709.3" stroke="#B5B5BD" stroke-width="0.9"/>
<line x1="771.76" x2="771.76" y1="705.7" y2="709.3" stroke="#B5B5BD" stroke-width="0.9"/>
<line x1="775.44" x2="775.44" y1="705.7" y2="709.3" stroke="#B5B5BD" stroke-width="0.9"/>
<line x1="779.11" x2="779.11" y1="705.7" y2="712.9" stroke="#B5B5BD" stroke-width="1.3"/>
<line x1="782.78" x2="782.78" y1="705.7" y2="709.3" stroke="#B5B5BD" stroke-width="0.9"/>
<line x1="786.46" x2="786.46" y1="705.7" y2="709.3" stroke="#B5B5BD" stroke-width="0.9"/>
<line x1="790.13" x2="790.13" y1="705.7" y2="709.3" stroke="#B5B5BD" stroke-width="0.9"/>
<line x1="793.81" x2="793.81" y1="705.7" y2="709.3" stroke="#B5B5BD" stroke-width="0.9"/>
<line x1="797.48" x2="797.48" y1="705.7" y2="712.9" stroke="#B5B5BD" stroke-width="1.3"/>
<line x1="801.15" x2="801.15" y1="705.7" y2="709.3" stroke="#B5B5BD" stroke-width="0.9"/>
<line x1="804.83" x2="804.83" y1="705.7" y2="709.3" stroke="#B5B5BD" stroke-width="0.9"/>
<line x1="808.50" x2="808.50" y1="705.7" y2="709.3" stroke="#B5B5BD" stroke-width="0.9"/>
<line x1="812.18" x2="812.18" y1="705.7" y2="709.3" stroke="#B5B5BD" stroke-width="0.9"/>
<line x1="815.85" x2="815.85" y1="705.7" y2="712.9" stroke="#B5B5BD" stroke-width="1.3"/>
<line x1="819.52" x2="819.52" y1="705.7" y2="709.3" stroke="#B5B5BD" stroke-width="0.9"/>
<line x1="823.20" x2="823.20" y1="705.7" y2="709.3" stroke="#B5B5BD" stroke-width="0.9"/>
<line x1="826.87" x2="826.87" y1="705.7" y2="709.3" stroke="#B5B5BD" stroke-width="0.9"/>
<line x1="830.55" x2="830.55" y1="705.7" y2="709.3" stroke="#B5B5BD" stroke-width="0.9"/>
<line x1="834.22" x2="834.22" y1="705.7" y2="712.9" stroke="#B5B5BD" stroke-width="1.3"/>
<line x1="837.89" x2="837.89" y1="705.7" y2="709.3" stroke="#B5B5BD" stroke-width="0.9"/>
<line x1="841.57" x2="841.57" y1="705.7" y2="709.3" stroke="#B5B5BD" stroke-width="0.9"/>
<line x1="845.24" x2="845.24" y1="705.7" y2="709.3" stroke="#B5B5BD" stroke-width="0.9"/>
<line x1="848.92" x2="848.92" y1="705.7" y2="709.3" stroke="#B5B5BD" stroke-width="0.9"/>
<line x1="852.59" x2="852.59" y1="705.7" y2="712.9" stroke="#B5B5BD" stroke-width="1.3"/>
<line x1="856.26" x2="856.26" y1="705.7" y2="709.3" stroke="#B5B5BD" stroke-width="0.9"/>
<line x1="859.94" x2="859.94" y1="705.7" y2="709.3" stroke="#B5B5BD" stroke-width="0.9"/>
<line x1="863.61" x2="863.61" y1="705.7" y2="709.3" stroke="#B5B5BD" stroke-width="0.9"/>
<line x1="867.29" x2="867.29" y1="705.7" y2="709.3" stroke="#B5B5BD" stroke-width="0.9"/>
<line x1="870.96" x2="870.96" y1="705.7" y2="712.9" stroke="#B5B5BD" stroke-width="1.3"/>
<line x1="874.63" x2="874.63" y1="705.7" y2="709.3" stroke="#B5B5BD" stroke-width="0.9"/>
<line x1="878.31" x2="878.31" y1="705.7" y2="709.3" stroke="#B5B5BD" stroke-width="0.9"/>
<line x1="881.98" x2="881.98" y1="705.7" y2="709.3" stroke="#B5B5BD" stroke-width="0.9"/>
<line x1="885.66" x2="885.66" y1="705.7" y2="709.3" stroke="#B5B5BD" stroke-width="0.9"/>
<line x1="889.33" x2="889.33" y1="705.7" y2="712.9" stroke="#B5B5BD" stroke-width="1.3"/>
<line x1="893.00" x2="893.00" y1="705.7" y2="709.3" stroke="#B5B5BD" stroke-width="0.9"/>
<line x1="896.68" x2="896.68" y1="705.7" y2="709.3" stroke="#B5B5BD" stroke-width="0.9"/>
<line x1="900.35" x2="900.35" y1="705.7" y2="709.3" stroke="#B5B5BD" stroke-width="0.9"/>
<line x1="904.03" x2="904.03" y1="705.7" y2="709.3" stroke="#B5B5BD" stroke-width="0.9"/>
<line x1="907.70" x2="907.70" y1="705.7" y2="712.9" stroke="#B5B5BD" stroke-width="1.3"/>
<line x1="911.37" x2="911.37" y1="705.7" y2="709.3" stroke="#B5B5BD" stroke-width="0.9"/>
<line x1="915.05" x2="915.05" y1="705.7" y2="709.3" stroke="#B5B5BD" stroke-width="0.9"/>
<line x1="918.72" x2="918.72" y1="705.7" y2="709.3" stroke="#B5B5BD" stroke-width="0.9"/>
<line x1="922.40" x2="922.40" y1="705.7" y2="709.3" stroke="#B5B5BD" stroke-width="0.9"/>
<line x1="926.07" x2="926.07" y1="705.7" y2="712.9" stroke="#B5B5BD" stroke-width="1.3"/>
<line x1="929.74" x2="929.74" y1="705.7" y2="709.3" stroke="#B5B5BD" stroke-width="0.9"/>
<line x1="933.42" x2="933.42" y1="705.7" y2="709.3" stroke="#B5B5BD" stroke-width="0.9"/>
<line x1="937.09" x2="937.09" y1="705.7" y2="709.3" stroke="#B5B5BD" stroke-width="0.9"/>
<line x1="940.77" x2="940.77" y1="705.7" y2="709.3" stroke="#B5B5BD" stroke-width="0.9"/>
<line x1="944.44" x2="944.44" y1="705.7" y2="712.9" stroke="#B5B5BD" stroke-width="1.3"/>
<line x1="948.11" x2="948.11" y1="705.7" y2="709.3" stroke="#B5B5BD" stroke-width="0.9"/>
<line x1="951.79" x2="951.79" y1="705.7" y2="709.3" stroke="#B5B5BD" stroke-width="0.9"/>
<line x1="955.46" x2="955.46" y1="705.7" y2="709.3" stroke="#B5B5BD" stroke-width="0.9"/>
<line x1="959.14" x2="959.14" y1="705.7" y2="709.3" stroke="#B5B5BD" stroke-width="0.9"/>
<line x1="962.81" x2="962.81" y1="705.7" y2="712.9" stroke="#B5B5BD" stroke-width="1.3"/>
<line x1="966.48" x2="966.48" y1="705.7" y2="709.3" stroke="#B5B5BD" stroke-width="0.9"/>
<line x1="970.16" x2="970.16" y1="705.7" y2="709.3" stroke="#B5B5BD" stroke-width="0.9"/>
<line x1="973.83" x2="973.83" y1="705.7" y2="709.3" stroke="#B5B5BD" stroke-width="0.9"/>
<line x1="977.51" x2="977.51" y1="705.7" y2="709.3" stroke="#B5B5BD" stroke-width="0.9"/>
<line x1="981.18" x2="981.18" y1="705.7" y2="712.9" stroke="#B5B5BD" stroke-width="1.3"/>
<line x1="984.85" x2="984.85" y1="705.7" y2="709.3" stroke="#B5B5BD" stroke-width="0.9"/>
<line x1="988.53" x2="988.53" y1="705.7" y2="709.3" stroke="#B5B5BD" stroke-width="0.9"/>
<line x1="992.20" x2="992.20" y1="705.7" y2="709.3" stroke="#B5B5BD" stroke-width="0.9"/>
<line x1="995.88" x2="995.88" y1="705.7" y2="709.3" stroke="#B5B5BD" stroke-width="0.9"/>
<line x1="999.55" x2="999.55" y1="705.7" y2="712.9" stroke="#B5B5BD" stroke-width="1.3"/>
<line x1="1003.22" x2="1003.22" y1="705.7" y2="709.3" stroke="#B5B5BD" stroke-width="0.9"/>
<line x1="1006.90" x2="1006.90" y1="705.7" y2="709.3" stroke="#B5B5BD" stroke-width="0.9"/>
<line x1="1010.57" x2="1010.57" y1="705.7" y2="709.3" stroke="#B5B5BD" stroke-width="0.9"/>
<line x1="1014.25" x2="1014.25" y1="705.7" y2="709.3" stroke="#B5B5BD" stroke-width="0.9"/>
<line x1="1017.92" x2="1017.92" y1="705.7" y2="712.9" stroke="#B5B5BD" stroke-width="1.3"/>
<line x1="1021.59" x2="1021.59" y1="705.7" y2="709.3" stroke="#B5B5BD" stroke-width="0.9"/>
<line x1="1025.27" x2="1025.27" y1="705.7" y2="709.3" stroke="#B5B5BD" stroke-width="0.9"/>
<line x1="1028.94" x2="1028.94" y1="705.7" y2="709.3" stroke="#B5B5BD" stroke-width="0.9"/>
<line x1="1032.62" x2="1032.62" y1="705.7" y2="709.3" stroke="#B5B5BD" stroke-width="0.9"/>
<line x1="1036.29" x2="1036.29" y1="705.7" y2="712.9" stroke="#B5B5BD" stroke-width="1.3"/>
<line x1="1039.96" x2="1039.96" y1="705.7" y2="709.3" stroke="#B5B5BD" stroke-width="0.9"/>
<line x1="1043.64" x2="1043.64" y1="705.7" y2="709.3" stroke="#B5B5BD" stroke-width="0.9"/>
<line x1="1047.31" x2="1047.31" y1="705.7" y2="709.3" stroke="#B5B5BD" stroke-width="0.9"/>
<line x1="1050.99" x2="1050.99" y1="705.7" y2="709.3" stroke="#B5B5BD" stroke-width="0.9"/>
<line x1="1054.66" x2="1054.66" y1="705.7" y2="712.9" stroke="#B5B5BD" stroke-width="1.3"/>
<line x1="1058.33" x2="1058.33" y1="705.7" y2="709.3" stroke="#B5B5BD" stroke-width="0.9"/>
<line x1="1062.01" x2="1062.01" y1="705.7" y2="709.3" stroke="#B5B5BD" stroke-width="0.9"/>
<line x1="1065.68" x2="1065.68" y1="705.7" y2="709.3" stroke="#B5B5BD" stroke-width="0.9"/>
<line x1="1069.36" x2="1069.36" y1="705.7" y2="709.3" stroke="#B5B5BD" stroke-width="0.9"/>
<line x1="1073.03" x2="1073.03" y1="705.7" y2="712.9" stroke="#B5B5BD" stroke-width="1.3"/>
<line x1="1076.70" x2="1076.70" y1="705.7" y2="709.3" stroke="#B5B5BD" stroke-width="0.9"/>
<line x1="1080.38" x2="1080.38" y1="705.7" y2="709.3" stroke="#B5B5BD" stroke-width="0.9"/>
<line x1="1084.05" x2="1084.05" y1="705.7" y2="709.3" stroke="#B5B5BD" stroke-width="0.9"/>
<line x1="1087.73" x2="1087.73" y1="705.7" y2="709.3" stroke="#B5B5BD" stroke-width="0.9"/>
<line x1="1091.40" x2="1091.40" y1="705.7" y2="712.9" stroke="#B5B5BD" stroke-width="1.3"/>
<line x1="1095.07" x2="1095.07" y1="705.7" y2="709.3" stroke="#B5B5BD" stroke-width="0.9"/>
<line x1="1098.75" x2="1098.75" y1="705.7" y2="709.3" stroke="#B5B5BD" stroke-width="0.9"/>
<line x1="1102.42" x2="1102.42" y1="705.7" y2="709.3" stroke="#B5B5BD" stroke-width="0.9"/>
<line x1="1106.10" x2="1106.10" y1="705.7" y2="709.3" stroke="#B5B5BD" stroke-width="0.9"/>
<line x1="1109.77" x2="1109.77" y1="705.7" y2="712.9" stroke="#B5B5BD" stroke-width="1.3"/>
<line x1="1113.44" x2="1113.44" y1="705.7" y2="709.3" stroke="#B5B5BD" stroke-width="0.9"/>
<line x1="1117.12" x2="1117.12" y1="705.7" y2="709.3" stroke="#B5B5BD" stroke-width="0.9"/>
<line x1="1120.79" x2="1120.79" y1="705.7" y2="709.3" stroke="#B5B5BD" stroke-width="0.9"/>
<line x1="1124.47" x2="1124.47" y1="705.7" y2="709.3" stroke="#B5B5BD" stroke-width="0.9"/>
<line x1="1128.14" x2="1128.14" y1="705.7" y2="712.9" stroke="#B5B5BD" stroke-width="1.3"/>
<line x1="1131.81" x2="1131.81" y1="705.7" y2="709.3" stroke="#B5B5BD" stroke-width="0.9"/>
<line x1="1135.49" x2="1135.49" y1="705.7" y2="709.3" stroke="#B5B5BD" stroke-width="0.9"/>
<line x1="1139.16" x2="1139.16" y1="705.7" y2="709.3" stroke="#B5B5BD" stroke-width="0.9"/>
<line x1="1142.84" x2="1142.84" y1="705.7" y2="709.3" stroke="#B5B5BD" stroke-width="0.9"/>
<line x1="1146.51" x2="1146.51" y1="705.7" y2="712.9" stroke="#B5B5BD" stroke-width="1.3"/>
<line x1="1150.18" x2="1150.18" y1="705.7" y2="709.3" stroke="#B5B5BD" stroke-width="0.9"/>
<line x1="1153.86" x2="1153.86" y1="705.7" y2="709.3" stroke="#B5B5BD" stroke-width="0.9"/>
<line x1="1157.53" x2="1157.53" y1="705.7" y2="709.3" stroke="#B5B5BD" stroke-width="0.9"/>
<line x1="1161.21" x2="1161.21" y1="705.7" y2="709.3" stroke="#B5B5BD" stroke-width="0.9"/>
<line x1="1164.88" x2="1164.88" y1="705.7" y2="712.9" stroke="#B5B5BD" stroke-width="1.3"/>
<line x1="1168.55" x2="1168.55" y1="705.7" y2="709.3" stroke="#B5B5BD" stroke-width="0.9"/>
<rect x="708.4" y="450.9" width="462" height="4" fill="#5FD751"/>
<rect x="708.4" y="686.8" width="462" height="4" fill="#5FD751"/>
<path d="M709.5,583.1 L713.1,591.6 L716.9,556.5 L720.5,548.1 L724.3,617.8 L727.1,559.3 L730.9,571.5 L734.2,550.4 L738.0,554.0 L742.1,551.9 L745.7,585.3 L749.2,611.7 L753.1,551.9 L756.9,545.5 L760.7,561.4 L764.3,535.6 L768.1,537.7 L771.9,604.1 L775.7,611.7 L779.3,529.2 L783.1,559.3 L786.9,599.4 L790.7,568.8 L794.5,550.4 L796.8,594.1 L800.8,580.4 L804.4,566.7 L808.0,612.7 L811.8,571.3 L815.6,564.1 L819.4,551.9 L823.0,604.3 L826.8,585.3 L830.6,577.7 L834.4,526.5 L838.0,611.7 L841.8,572.6 L845.6,572.6 L849.4,554.0 L853.2,591.4 L857.0,561.4 L860.6,566.2 L864.4,502.6 L868.0,559.3 L870.9,561.4 L874.5,590.3 L878.1,568.8 L881.9,535.6 L885.5,608.9 L889.3,588.2 L893.1,564.1 L896.9,580.4 L900.5,594.1 L904.3,537.7 L908.1,573.0 L911.9,568.8 L915.5,601.5 L919.3,604.3 L923.1,542.8 L926.9,568.8 L930.5,551.9 L934.3,582.9 L938.1,641.7 L940.7,564.1 L944.5,587.8 L948.1,554.0 L951.9,550.2 L955.7,623.1 L959.3,582.9 L963.1,559.3 L966.9,623.1 L970.7,540.7 L974.5,559.3 L978.1,580.4 L981.9,580.4 L985.7,566.2 L989.3,628.0 L993.1,545.5 L996.9,566.2 L1000.4,582.9 L1003.8,580.4 L1008.0,568.8 L1010.6,580.4 L1014.4,529.0 L1018.2,577.7 L1021.8,573.0 L1025.6,566.2 L1029.4,582.9 L1033.2,623.1 L1037.0,585.3 L1040.6,559.3 L1044.4,554.0 L1048.2,608.9 L1051.8,566.2 L1055.6,599.4 L1059.4,545.5 L1063.0,561.4 L1066.8,568.8 L1070.6,521.6 L1074.0,611.7 L1078.2,611.7 L1082.0,551.9" fill="none" stroke="#4A84C6" stroke-width="2.4" stroke-linejoin="round"/>
<circle cx="709.5" cy="583.1" r="3.7" fill="#C9484E"/>
<circle cx="713.1" cy="591.6" r="3.7" fill="#C9484E"/>
<circle cx="716.9" cy="556.5" r="3.7" fill="#C9484E"/>
<circle cx="720.5" cy="548.1" r="3.7" fill="#C9484E"/>
<circle cx="724.3" cy="617.8" r="3.7" fill="#C9484E"/>
<circle cx="727.1" cy="559.3" r="3.7" fill="#C9484E"/>
<circle cx="730.9" cy="571.5" r="3.7" fill="#C9484E"/>
<circle cx="734.2" cy="550.4" r="3.7" fill="#C9484E"/>
<circle cx="738.0" cy="554.0" r="3.7" fill="#C9484E"/>
<circle cx="742.1" cy="551.9" r="3.7" fill="#C9484E"/>
<circle cx="745.7" cy="585.3" r="3.7" fill="#C9484E"/>
<circle cx="749.2" cy="611.7" r="3.7" fill="#C9484E"/>
<circle cx="753.1" cy="551.9" r="3.7" fill="#C9484E"/>
<circle cx="756.9" cy="545.5" r="3.7" fill="#C9484E"/>
<circle cx="760.7" cy="561.4" r="3.7" fill="#C9484E"/>
<circle cx="764.3" cy="535.6" r="3.7" fill="#C9484E"/>
<circle cx="768.1" cy="537.7" r="3.7" fill="#C9484E"/>
<circle cx="771.9" cy="604.1" r="3.7" fill="#C9484E"/>
<circle cx="775.7" cy="611.7" r="3.7" fill="#C9484E"/>
<circle cx="779.3" cy="529.2" r="3.7" fill="#C9484E"/>
<circle cx="783.1" cy="559.3" r="3.7" fill="#C9484E"/>
<circle cx="786.9" cy="599.4" r="3.7" fill="#C9484E"/>
<circle cx="790.7" cy="568.8" r="3.7" fill="#C9484E"/>
<circle cx="794.5" cy="550.4" r="3.7" fill="#C9484E"/>
<circle cx="796.8" cy="594.1" r="3.7" fill="#C9484E"/>
<circle cx="800.8" cy="580.4" r="3.7" fill="#C9484E"/>
<circle cx="804.4" cy="566.7" r="3.7" fill="#C9484E"/>
<circle cx="808.0" cy="612.7" r="3.7" fill="#C9484E"/>
<circle cx="811.8" cy="571.3" r="3.7" fill="#C9484E"/>
<circle cx="815.6" cy="564.1" r="3.7" fill="#C9484E"/>
<circle cx="819.4" cy="551.9" r="3.7" fill="#C9484E"/>
<circle cx="823.0" cy="604.3" r="3.7" fill="#C9484E"/>
<circle cx="826.8" cy="585.3" r="3.7" fill="#C9484E"/>
<circle cx="830.6" cy="577.7" r="3.7" fill="#C9484E"/>
<circle cx="834.4" cy="526.5" r="3.7" fill="#C9484E"/>
<circle cx="838.0" cy="611.7" r="3.7" fill="#C9484E"/>
<circle cx="841.8" cy="572.6" r="3.7" fill="#C9484E"/>
<circle cx="845.6" cy="572.6" r="3.7" fill="#C9484E"/>
<circle cx="849.4" cy="554.0" r="3.7" fill="#C9484E"/>
<circle cx="853.2" cy="591.4" r="3.7" fill="#C9484E"/>
<circle cx="857.0" cy="561.4" r="3.7" fill="#C9484E"/>
<circle cx="860.6" cy="566.2" r="3.7" fill="#C9484E"/>
<circle cx="864.4" cy="502.6" r="3.7" fill="#C9484E"/>
<circle cx="868.0" cy="559.3" r="3.7" fill="#C9484E"/>
<circle cx="870.9" cy="561.4" r="3.7" fill="#C9484E"/>
<circle cx="874.5" cy="590.3" r="3.7" fill="#C9484E"/>
<circle cx="878.1" cy="568.8" r="3.7" fill="#C9484E"/>
<circle cx="881.9" cy="535.6" r="3.7" fill="#C9484E"/>
<circle cx="885.5" cy="608.9" r="3.7" fill="#C9484E"/>
<circle cx="889.3" cy="588.2" r="3.7" fill="#C9484E"/>
<circle cx="893.1" cy="564.1" r="3.7" fill="#C9484E"/>
<circle cx="896.9" cy="580.4" r="3.7" fill="#C9484E"/>
<circle cx="900.5" cy="594.1" r="3.7" fill="#C9484E"/>
<circle cx="904.3" cy="537.7" r="3.7" fill="#C9484E"/>
<circle cx="908.1" cy="573.0" r="3.7" fill="#C9484E"/>
<circle cx="911.9" cy="568.8" r="3.7" fill="#C9484E"/>
<circle cx="915.5" cy="601.5" r="3.7" fill="#C9484E"/>
<circle cx="919.3" cy="604.3" r="3.7" fill="#C9484E"/>
<circle cx="923.1" cy="542.8" r="3.7" fill="#C9484E"/>
<circle cx="926.9" cy="568.8" r="3.7" fill="#C9484E"/>
<circle cx="930.5" cy="551.9" r="3.7" fill="#C9484E"/>
<circle cx="934.3" cy="582.9" r="3.7" fill="#C9484E"/>
<circle cx="938.1" cy="641.7" r="3.7" fill="#C9484E"/>
<circle cx="940.7" cy="564.1" r="3.7" fill="#C9484E"/>
<circle cx="944.5" cy="587.8" r="3.7" fill="#C9484E"/>
<circle cx="948.1" cy="554.0" r="3.7" fill="#C9484E"/>
<circle cx="951.9" cy="550.2" r="3.7" fill="#C9484E"/>
<circle cx="955.7" cy="623.1" r="3.7" fill="#C9484E"/>
<circle cx="959.3" cy="582.9" r="3.7" fill="#C9484E"/>
<circle cx="963.1" cy="559.3" r="3.7" fill="#C9484E"/>
<circle cx="966.9" cy="623.1" r="3.7" fill="#C9484E"/>
<circle cx="970.7" cy="540.7" r="3.7" fill="#C9484E"/>
<circle cx="974.5" cy="559.3" r="3.7" fill="#C9484E"/>
<circle cx="978.1" cy="580.4" r="3.7" fill="#C9484E"/>
<circle cx="981.9" cy="580.4" r="3.7" fill="#C9484E"/>
<circle cx="985.7" cy="566.2" r="3.7" fill="#C9484E"/>
<circle cx="989.3" cy="628.0" r="3.7" fill="#C9484E"/>
<circle cx="993.1" cy="545.5" r="3.7" fill="#C9484E"/>
<circle cx="996.9" cy="566.2" r="3.7" fill="#C9484E"/>
<circle cx="1000.4" cy="582.9" r="3.7" fill="#C9484E"/>
<circle cx="1003.8" cy="580.4" r="3.7" fill="#C9484E"/>
<circle cx="1008.0" cy="568.8" r="3.7" fill="#C9484E"/>
<circle cx="1010.6" cy="580.4" r="3.7" fill="#C9484E"/>
<circle cx="1014.4" cy="529.0" r="3.7" fill="#C9484E"/>
<circle cx="1018.2" cy="577.7" r="3.7" fill="#C9484E"/>
<circle cx="1021.8" cy="573.0" r="3.7" fill="#C9484E"/>
<circle cx="1025.6" cy="566.2" r="3.7" fill="#C9484E"/>
<circle cx="1029.4" cy="582.9" r="3.7" fill="#C9484E"/>
<circle cx="1033.2" cy="623.1" r="3.7" fill="#C9484E"/>
<circle cx="1037.0" cy="585.3" r="3.7" fill="#C9484E"/>
<circle cx="1040.6" cy="559.3" r="3.7" fill="#C9484E"/>
<circle cx="1044.4" cy="554.0" r="3.7" fill="#C9484E"/>
<circle cx="1048.2" cy="608.9" r="3.7" fill="#C9484E"/>
<circle cx="1051.8" cy="566.2" r="3.7" fill="#C9484E"/>
<circle cx="1055.6" cy="599.4" r="3.7" fill="#C9484E"/>
<circle cx="1059.4" cy="545.5" r="3.7" fill="#C9484E"/>
<circle cx="1063.0" cy="561.4" r="3.7" fill="#C9484E"/>
<circle cx="1066.8" cy="568.8" r="3.7" fill="#C9484E"/>
<circle cx="1070.6" cy="521.6" r="3.7" fill="#C9484E"/>
<circle cx="1074.0" cy="611.7" r="3.7" fill="#C9484E"/>
<circle cx="1078.2" cy="611.7" r="3.7" fill="#C9484E"/>
<circle cx="1082.0" cy="551.9" r="3.7" fill="#C9484E"/>
<rect x="708.4" y="570.5" width="462" height="3.8" fill="#A47C55"/>
</svg>
<div class="rot" style="left:615.8px;top:637.6px;transform:rotate(-90deg);font:20px/28px 'Liberation Sans',sans-serif;color:#2B3758;letter-spacing:.12px">Testbeispiel 10</div>
<div class="b" style="left:1100px;top:435.4px;width:70px;height:14px;overflow:hidden"><span class="t" style="left:24.4px;top:-5.6px;font:14.8px/20px 'Liberation Sans',sans-serif;color:#111;letter-spacing:.55px">[上限]</span></div>
<span class="t" style="left:1091px;top:549.4px;font:14.9px/20px 'Liberation Sans',sans-serif;color:#111">算术平均值</span>
<span class="t" style="left:1124.4px;top:665.3px;font:14.8px/20px 'Liberation Sans',sans-serif;color:#111;letter-spacing:.55px">[下限]</span>
<div class="b" style="left:1185px;top:264.8px;width:411.5px;height:497.5px;border:1.5px solid #9DB2CE;border-left-width:1px;border-right:2px solid #97ADCB;background:#D8D8F9"></div>
<div class="b" style="left:1183.8px;top:421px;width:2.4px;height:341px;background:#93AACA"></div>
<svg class="abs" style="left:0;top:0" width="1600" height="852" viewBox="0 0 1600 852">
<rect x="1255.6" y="281.4" width="279.20000000000005" height="414.80000000000007" fill="#E3ECE1"/>
<line x1="1255.6" x2="1534.8" y1="660.97" y2="660.97" stroke="#C6C8C6" stroke-width="1.1"/>
<line x1="1255.6" x2="1534.8" y1="625.73" y2="625.73" stroke="#C6C8C6" stroke-width="1.1"/>
<line x1="1255.6" x2="1534.8" y1="590.50" y2="590.50" stroke="#C6C8C6" stroke-width="1.1"/>
<line x1="1255.6" x2="1534.8" y1="555.26" y2="555.26" stroke="#C6C8C6" stroke-width="1.1"/>
<line x1="1255.6" x2="1534.8" y1="520.03" y2="520.03" stroke="#C6C8C6" stroke-width="1.1"/>
<line x1="1255.6" x2="1534.8" y1="484.79" y2="484.79" stroke="#C6C8C6" stroke-width="1.1"/>
<line x1="1255.6" x2="1534.8" y1="449.56" y2="449.56" stroke="#C6C8C6" stroke-width="1.1"/>
<line x1="1255.6" x2="1534.8" y1="414.32" y2="414.32" stroke="#C6C8C6" stroke-width="1.1"/>
<line x1="1255.6" x2="1534.8" y1="379.09" y2="379.09" stroke="#C6C8C6" stroke-width="1.1"/>
<line x1="1255.6" x2="1534.8" y1="343.85" y2="343.85" stroke="#C6C8C6" stroke-width="1.1"/>
<line x1="1255.6" x2="1534.8" y1="308.62" y2="308.62" stroke="#C6C8C6" stroke-width="1.1"/>
<rect x="1255.6" y="281.4" width="279.20000000000005" height="414.80000000000007" fill="none" stroke="#BBBFBF" stroke-width="1"/>
<line x1="1248.6" x2="1255.6" y1="696.20" y2="696.20" stroke="#B5B5BD" stroke-width="1.2"/>
<line x1="1252.3999999999999" x2="1255.6" y1="690.33" y2="690.33" stroke="#B5B5BD" stroke-width="0.8"/>
<line x1="1252.3999999999999" x2="1255.6" y1="684.46" y2="684.46" stroke="#B5B5BD" stroke-width="0.8"/>
<line x1="1252.3999999999999" x2="1255.6" y1="678.58" y2="678.58" stroke="#B5B5BD" stroke-width="0.8"/>
<line x1="1252.3999999999999" x2="1255.6" y1="672.71" y2="672.71" stroke="#B5B5BD" stroke-width="0.8"/>
<line x1="1252.3999999999999" x2="1255.6" y1="666.84" y2="666.84" stroke="#B5B5BD" stroke-width="0.8"/>
<line x1="1248.6" x2="1255.6" y1="660.97" y2="660.97" stroke="#B5B5BD" stroke-width="1.2"/>
<line x1="1252.3999999999999" x2="1255.6" y1="655.09" y2="655.09" stroke="#B5B5BD" stroke-width="0.8"/>
<line x1="1252.3999999999999" x2="1255.6" y1="649.22" y2="649.22" stroke="#B5B5BD" stroke-width="0.8"/>
<line x1="1252.3999999999999" x2="1255.6" y1="643.35" y2="643.35" stroke="#B5B5BD" stroke-width="0.8"/>
<line x1="1252.3999999999999" x2="1255.6" y1="637.48" y2="637.48" stroke="#B5B5BD" stroke-width="0.8"/>
<line x1="1252.3999999999999" x2="1255.6" y1="631.60" y2="631.60" stroke="#B5B5BD" stroke-width="0.8"/>
<line x1="1248.6" x2="1255.6" y1="625.73" y2="625.73" stroke="#B5B5BD" stroke-width="1.2"/>
<line x1="1252.3999999999999" x2="1255.6" y1="619.86" y2="619.86" stroke="#B5B5BD" stroke-width="0.8"/>
<line x1="1252.3999999999999" x2="1255.6" y1="613.99" y2="613.99" stroke="#B5B5BD" stroke-width="0.8"/>
<line x1="1252.3999999999999" x2="1255.6" y1="608.11" y2="608.11" stroke="#B5B5BD" stroke-width="0.8"/>
<line x1="1252.3999999999999" x2="1255.6" y1="602.24" y2="602.24" stroke="#B5B5BD" stroke-width="0.8"/>
<line x1="1252.3999999999999" x2="1255.6" y1="596.37" y2="596.37" stroke="#B5B5BD" stroke-width="0.8"/>
<line x1="1248.6" x2="1255.6" y1="590.50" y2="590.50" stroke="#B5B5BD" stroke-width="1.2"/>
<line x1="1252.3999999999999" x2="1255.6" y1="584.62" y2="584.62" stroke="#B5B5BD" stroke-width="0.8"/>
<line x1="1252.3999999999999" x2="1255.6" y1="578.75" y2="578.75" stroke="#B5B5BD" stroke-width="0.8"/>
<line x1="1252.3999999999999" x2="1255.6" y1="572.88" y2="572.88" stroke="#B5B5BD" stroke-width="0.8"/>
<line x1="1252.3999999999999" x2="1255.6" y1="567.01" y2="567.01" stroke="#B5B5BD" stroke-width="0.8"/>
<line x1="1252.3999999999999" x2="1255.6" y1="561.13" y2="561.13" stroke="#B5B5BD" stroke-width="0.8"/>
<line x1="1248.6" x2="1255.6" y1="555.26" y2="555.26" stroke="#B5B5BD" stroke-width="1.2"/>
<line x1="1252.3999999999999" x2="1255.6" y1="549.39" y2="549.39" stroke="#B5B5BD" stroke-width="0.8"/>
<line x1="1252.3999999999999" x2="1255.6" y1="543.52" y2="543.52" stroke="#B5B5BD" stroke-width="0.8"/>
<line x1="1252.3999999999999" x2="1255.6" y1="537.64" y2="537.64" stroke="#B5B5BD" stroke-width="0.8"/>
<line x1="1252.3999999999999" x2="1255.6" y1="531.77" y2="531.77" stroke="#B5B5BD" stroke-width="0.8"/>
<line x1="1252.3999999999999" x2="1255.6" y1="525.90" y2="525.90" stroke="#B5B5BD" stroke-width="0.8"/>
<line x1="1248.6" x2="1255.6" y1="520.03" y2="520.03" stroke="#B5B5BD" stroke-width="1.2"/>
<line x1="1252.3999999999999" x2="1255.6" y1="514.15" y2="514.15" stroke="#B5B5BD" stroke-width="0.8"/>
<line x1="1252.3999999999999" x2="1255.6" y1="508.28" y2="508.28" stroke="#B5B5BD" stroke-width="0.8"/>
<line x1="1252.3999999999999" x2="1255.6" y1="502.41" y2="502.41" stroke="#B5B5BD" stroke-width="0.8"/>
<line x1="1252.3999999999999" x2="1255.6" y1="496.54" y2="496.54" stroke="#B5B5BD" stroke-width="0.8"/>
<line x1="1252.3999999999999" x2="1255.6" y1="490.66" y2="490.66" stroke="#B5B5BD" stroke-width="0.8"/>
<line x1="1248.6" x2="1255.6" y1="484.79" y2="484.79" stroke="#B5B5BD" stroke-width="1.2"/>
<line x1="1252.3999999999999" x2="1255.6" y1="478.92" y2="478.92" stroke="#B5B5BD" stroke-width="0.8"/>
<line x1="1252.3999999999999" x2="1255.6" y1="473.05" y2="473.05" stroke="#B5B5BD" stroke-width="0.8"/>
<line x1="1252.3999999999999" x2="1255.6" y1="467.17" y2="467.17" stroke="#B5B5BD" stroke-width="0.8"/>
<line x1="1252.3999999999999" x2="1255.6" y1="461.30" y2="461.30" stroke="#B5B5BD" stroke-width="0.8"/>
<line x1="1252.3999999999999" x2="1255.6" y1="455.43" y2="455.43" stroke="#B5B5BD" stroke-width="0.8"/>
<line x1="1248.6" x2="1255.6" y1="449.56" y2="449.56" stroke="#B5B5BD" stroke-width="1.2"/>
<line x1="1252.3999999999999" x2="1255.6" y1="443.68" y2="443.68" stroke="#B5B5BD" stroke-width="0.8"/>
<line x1="1252.3999999999999" x2="1255.6" y1="437.81" y2="437.81" stroke="#B5B5BD" stroke-width="0.8"/>
<line x1="1252.3999999999999" x2="1255.6" y1="431.94" y2="431.94" stroke="#B5B5BD" stroke-width="0.8"/>
<line x1="1252.3999999999999" x2="1255.6" y1="426.07" y2="426.07" stroke="#B5B5BD" stroke-width="0.8"/>
<line x1="1252.3999999999999" x2="1255.6" y1="420.19" y2="420.19" stroke="#B5B5BD" stroke-width="0.8"/>
<line x1="1248.6" x2="1255.6" y1="414.32" y2="414.32" stroke="#B5B5BD" stroke-width="1.2"/>
<line x1="1252.3999999999999" x2="1255.6" y1="408.45" y2="408.45" stroke="#B5B5BD" stroke-width="0.8"/>
<line x1="1252.3999999999999" x2="1255.6" y1="402.58" y2="402.58" stroke="#B5B5BD" stroke-width="0.8"/>
<line x1="1252.3999999999999" x2="1255.6" y1="396.70" y2="396.70" stroke="#B5B5BD" stroke-width="0.8"/>
<line x1="1252.3999999999999" x2="1255.6" y1="390.83" y2="390.83" stroke="#B5B5BD" stroke-width="0.8"/>
<line x1="1252.3999999999999" x2="1255.6" y1="384.96" y2="384.96" stroke="#B5B5BD" stroke-width="0.8"/>
<line x1="1248.6" x2="1255.6" y1="379.09" y2="379.09" stroke="#B5B5BD" stroke-width="1.2"/>
<line x1="1252.3999999999999" x2="1255.6" y1="373.21" y2="373.21" stroke="#B5B5BD" stroke-width="0.8"/>
<line x1="1252.3999999999999" x2="1255.6" y1="367.34" y2="367.34" stroke="#B5B5BD" stroke-width="0.8"/>
<line x1="1252.3999999999999" x2="1255.6" y1="361.47" y2="361.47" stroke="#B5B5BD" stroke-width="0.8"/>
<line x1="1252.3999999999999" x2="1255.6" y1="355.60" y2="355.60" stroke="#B5B5BD" stroke-width="0.8"/>
<line x1="1252.3999999999999" x2="1255.6" y1="349.72" y2="349.72" stroke="#B5B5BD" stroke-width="0.8"/>
<line x1="1248.6" x2="1255.6" y1="343.85" y2="343.85" stroke="#B5B5BD" stroke-width="1.2"/>
<line x1="1252.3999999999999" x2="1255.6" y1="337.98" y2="337.98" stroke="#B5B5BD" stroke-width="0.8"/>
<line x1="1252.3999999999999" x2="1255.6" y1="332.11" y2="332.11" stroke="#B5B5BD" stroke-width="0.8"/>
<line x1="1252.3999999999999" x2="1255.6" y1="326.23" y2="326.23" stroke="#B5B5BD" stroke-width="0.8"/>
<line x1="1252.3999999999999" x2="1255.6" y1="320.36" y2="320.36" stroke="#B5B5BD" stroke-width="0.8"/>
<line x1="1252.3999999999999" x2="1255.6" y1="314.49" y2="314.49" stroke="#B5B5BD" stroke-width="0.8"/>
<line x1="1248.6" x2="1255.6" y1="308.62" y2="308.62" stroke="#B5B5BD" stroke-width="1.2"/>
<line x1="1252.3999999999999" x2="1255.6" y1="302.74" y2="302.74" stroke="#B5B5BD" stroke-width="0.8"/>
<line x1="1252.3999999999999" x2="1255.6" y1="296.87" y2="296.87" stroke="#B5B5BD" stroke-width="0.8"/>
<line x1="1252.3999999999999" x2="1255.6" y1="291.00" y2="291.00" stroke="#B5B5BD" stroke-width="0.8"/>
<line x1="1252.3999999999999" x2="1255.6" y1="285.13" y2="285.13" stroke="#B5B5BD" stroke-width="0.8"/>
<line x1="1534.8" x2="1542.3" y1="696.20" y2="696.20" stroke="#B5B5BD" stroke-width="1.2"/>
<line x1="1534.8" x2="1538.3" y1="682.37" y2="682.37" stroke="#B5B5BD" stroke-width="0.8"/>
<line x1="1534.8" x2="1538.3" y1="668.55" y2="668.55" stroke="#B5B5BD" stroke-width="0.8"/>
<line x1="1534.8" x2="1538.3" y1="654.72" y2="654.72" stroke="#B5B5BD" stroke-width="0.8"/>
<line x1="1534.8" x2="1538.3" y1="640.90" y2="640.90" stroke="#B5B5BD" stroke-width="0.8"/>
<line x1="1534.8" x2="1542.3" y1="627.07" y2="627.07" stroke="#B5B5BD" stroke-width="1.2"/>
<line x1="1534.8" x2="1538.3" y1="613.24" y2="613.24" stroke="#B5B5BD" stroke-width="0.8"/>
<line x1="1534.8" x2="1538.3" y1="599.42" y2="599.42" stroke="#B5B5BD" stroke-width="0.8"/>
<line x1="1534.8" x2="1538.3" y1="585.59" y2="585.59" stroke="#B5B5BD" stroke-width="0.8"/>
<line x1="1534.8" x2="1538.3" y1="571.77" y2="571.77" stroke="#B5B5BD" stroke-width="0.8"/>
<line x1="1534.8" x2="1542.3" y1="557.94" y2="557.94" stroke="#B5B5BD" stroke-width="1.2"/>
<line x1="1534.8" x2="1538.3" y1="544.11" y2="544.11" stroke="#B5B5BD" stroke-width="0.8"/>
<line x1="1534.8" x2="1538.3" y1="530.29" y2="530.29" stroke="#B5B5BD" stroke-width="0.8"/>
<line x1="1534.8" x2="1538.3" y1="516.46" y2="516.46" stroke="#B5B5BD" stroke-width="0.8"/>
<line x1="1534.8" x2="1538.3" y1="502.64" y2="502.64" stroke="#B5B5BD" stroke-width="0.8"/>
<line x1="1534.8" x2="1542.3" y1="488.81" y2="488.81" stroke="#B5B5BD" stroke-width="1.2"/>
<line x1="1534.8" x2="1538.3" y1="474.98" y2="474.98" stroke="#B5B5BD" stroke-width="0.8"/>
<line x1="1534.8" x2="1538.3" y1="461.16" y2="461.16" stroke="#B5B5BD" stroke-width="0.8"/>
<line x1="1534.8" x2="1538.3" y1="447.33" y2="447.33" stroke="#B5B5BD" stroke-width="0.8"/>
<line x1="1534.8" x2="1538.3" y1="433.51" y2="433.51" stroke="#B5B5BD" stroke-width="0.8"/>
<line x1="1534.8" x2="1542.3" y1="419.68" y2="419.68" stroke="#B5B5BD" stroke-width="1.2"/>
<line x1="1534.8" x2="1538.3" y1="405.85" y2="405.85" stroke="#B5B5BD" stroke-width="0.8"/>
<line x1="1534.8" x2="1538.3" y1="392.03" y2="392.03" stroke="#B5B5BD" stroke-width="0.8"/>
<line x1="1534.8" x2="1538.3" y1="378.20" y2="378.20" stroke="#B5B5BD" stroke-width="0.8"/>
<line x1="1534.8" x2="1538.3" y1="364.38" y2="364.38" stroke="#B5B5BD" stroke-width="0.8"/>
<line x1="1534.8" x2="1542.3" y1="350.55" y2="350.55" stroke="#B5B5BD" stroke-width="1.2"/>
<line x1="1534.8" x2="1538.3" y1="336.72" y2="336.72" stroke="#B5B5BD" stroke-width="0.8"/>
<line x1="1534.8" x2="1538.3" y1="322.90" y2="322.90" stroke="#B5B5BD" stroke-width="0.8"/>
<line x1="1534.8" x2="1538.3" y1="309.07" y2="309.07" stroke="#B5B5BD" stroke-width="0.8"/>
<line x1="1534.8" x2="1538.3" y1="295.25" y2="295.25" stroke="#B5B5BD" stroke-width="0.8"/>
<line x1="1534.8" x2="1542.3" y1="281.42" y2="281.42" stroke="#B5B5BD" stroke-width="1.2"/>
<rect x="1297.3" y="684.9" width="21.8" height="11.3" fill="#00DC00" stroke="#0DB80D" stroke-width="0.9"/>
<rect x="1319.1" y="650" width="22.1" height="46.2" fill="#00DC00" stroke="#0DB80D" stroke-width="0.9"/>
<rect x="1341.2" y="546.4" width="21.8" height="149.8" fill="#00DC00" stroke="#0DB80D" stroke-width="0.9"/>
<rect x="1363.0" y="499.9" width="21.4" height="196.3" fill="#00DC00" stroke="#0DB80D" stroke-width="0.9"/>
<rect x="1384.4" y="316.3" width="21.5" height="379.9" fill="#00DC00" stroke="#0DB80D" stroke-width="0.9"/>
<rect x="1405.9" y="419.9" width="21.5" height="276.3" fill="#00DC00" stroke="#0DB80D" stroke-width="0.9"/>
<rect x="1427.4" y="603.3" width="21.4" height="92.9" fill="#00DC00" stroke="#0DB80D" stroke-width="0.9"/>
<rect x="1448.8" y="673.3" width="21.4" height="22.9" fill="#00DC00" stroke="#0DB80D" stroke-width="0.9"/>
<line x1="1266.80" x2="1266.80" y1="696.2" y2="702.7" stroke="#B5B5BD" stroke-width="1.3"/>
<line x1="1288.14" x2="1288.14" y1="696.2" y2="702.7" stroke="#B5B5BD" stroke-width="1.3"/>
<line x1="1309.48" x2="1309.48" y1="696.2" y2="702.7" stroke="#B5B5BD" stroke-width="1.3"/>
<line x1="1330.82" x2="1330.82" y1="696.2" y2="702.7" stroke="#B5B5BD" stroke-width="1.3"/>
<line x1="1352.16" x2="1352.16" y1="696.2" y2="702.7" stroke="#B5B5BD" stroke-width="1.3"/>
<line x1="1373.50" x2="1373.50" y1="696.2" y2="702.7" stroke="#B5B5BD" stroke-width="1.3"/>
<line x1="1394.84" x2="1394.84" y1="696.2" y2="702.7" stroke="#B5B5BD" stroke-width="1.3"/>
<line x1="1416.18" x2="1416.18" y1="696.2" y2="702.7" stroke="#B5B5BD" stroke-width="1.3"/>
<line x1="1437.52" x2="1437.52" y1="696.2" y2="702.7" stroke="#B5B5BD" stroke-width="1.3"/>
<line x1="1458.86" x2="1458.86" y1="696.2" y2="702.7" stroke="#B5B5BD" stroke-width="1.3"/>
<line x1="1480.20" x2="1480.20" y1="696.2" y2="702.7" stroke="#B5B5BD" stroke-width="1.3"/>
<line x1="1501.54" x2="1501.54" y1="696.2" y2="702.7" stroke="#B5B5BD" stroke-width="1.3"/>
<line x1="1522.88" x2="1522.88" y1="696.2" y2="702.7" stroke="#B5B5BD" stroke-width="1.3"/>
<rect x="1265.4" y="281.4" width="3.4" height="414.80000000000007" fill="#5FD751"/>
<rect x="1521.5" y="281.4" width="3.4" height="414.80000000000007" fill="#5FD751"/>
<rect x="1391.5" y="281.4" width="3.3" height="414.80000000000007" fill="#A47C55"/>
</svg>
<div class="rot" style="left:1276.0px;top:708.6px;transform:rotate(90deg);font:14px/18px 'Liberation Sans',sans-serif;color:#2B3758;letter-spacing:-.28px">60.000</div>
<div class="rot" style="left:1297.3px;top:708.6px;transform:rotate(90deg);font:14px/18px 'Liberation Sans',sans-serif;color:#2B3758;letter-spacing:-.28px">60.833</div>
<div class="rot" style="left:1318.7px;top:708.6px;transform:rotate(90deg);font:14px/18px 'Liberation Sans',sans-serif;color:#2B3758;letter-spacing:-.28px">61.666</div>
<div class="rot" style="left:1340.0px;top:708.6px;transform:rotate(90deg);font:14px/18px 'Liberation Sans',sans-serif;color:#2B3758;letter-spacing:-.28px">62.499</div>
<div class="rot" style="left:1361.4px;top:708.6px;transform:rotate(90deg);font:14px/18px 'Liberation Sans',sans-serif;color:#2B3758;letter-spacing:-.28px">63.332</div>
<div class="rot" style="left:1382.7px;top:708.6px;transform:rotate(90deg);font:14px/18px 'Liberation Sans',sans-serif;color:#2B3758;letter-spacing:-.28px">64.165</div>
<div class="rot" style="left:1404.0px;top:708.6px;transform:rotate(90deg);font:14px/18px 'Liberation Sans',sans-serif;color:#2B3758;letter-spacing:-.28px">64.998</div>
<div class="rot" style="left:1425.4px;top:708.6px;transform:rotate(90deg);font:14px/18px 'Liberation Sans',sans-serif;color:#2B3758;letter-spacing:-.28px">65.831</div>
<div class="rot" style="left:1446.7px;top:708.6px;transform:rotate(90deg);font:14px/18px 'Liberation Sans',sans-serif;color:#2B3758;letter-spacing:-.28px">66.664</div>
<div class="rot" style="left:1468.1px;top:708.6px;transform:rotate(90deg);font:14px/18px 'Liberation Sans',sans-serif;color:#2B3758;letter-spacing:-.28px">67.497</div>
<div class="rot" style="left:1489.4px;top:708.6px;transform:rotate(90deg);font:14px/18px 'Liberation Sans',sans-serif;color:#2B3758;letter-spacing:-.28px">68.330</div>
<div class="rot" style="left:1510.7px;top:708.6px;transform:rotate(90deg);font:14px/18px 'Liberation Sans',sans-serif;color:#2B3758;letter-spacing:-.28px">69.163</div>
<div class="rot" style="left:1532.1px;top:708.6px;transform:rotate(90deg);font:14px/18px 'Liberation Sans',sans-serif;color:#2B3758;letter-spacing:-.28px">69.996</div>
<div class="b" style="left:1255.6px;top:281.4px;width:279.2px;height:200px;overflow:hidden"><div class="rot" style="left:31.6px;top:3.2px;transform:rotate(90deg);font:15px/18px 'Liberation Sans',sans-serif;color:#111;letter-spacing:.9px">[下限]</div><div class="rot" style="left:157.4px;top:3.4px;transform:rotate(90deg);font:14.7px/18px 'Liberation Sans',sans-serif;color:#111">算术平均值</div><div class="rot" style="left:284.4px;top:3.2px;transform:rotate(90deg);font:15px/18px 'Liberation Sans',sans-serif;color:#111;letter-spacing:.9px">[上限]</div></div>
<div class="rot" style="left:1191.4px;top:561px;transform:rotate(-90deg);font:21.6px/28px 'Liberation Serif',serif;color:#555;letter-spacing:1.9px">绝对频率<span style="letter-spacing:1.5px;margin-left:1px">( % )</span></div>
<div class="rot" style="left:1589.6px;top:443.5px;transform:rotate(90deg);font:21.5px/26px 'Liberation Serif',serif;color:#555;letter-spacing:.6px">相对频率</div>
<div class="b" style="left:2.4px;top:762.2px;width:1595.4px;height:47px;background:#FAFCFE"></div>
<div class="btn" style="left:3.4px;"></div>
<div class="btn" style="left:322.4px;"></div>
<div class="btn" style="left:641.2px;"></div>
<div class="btn" style="left:959.6px;"></div>
<div class="btn" style="left:1278.6px;background:#CFDEEF;border-color:#C0D0E4"></div>
<div class="b" style="left:0;top:809px;width:1600px;height:5.4px;background:linear-gradient(#DCE6F2,#E4ECF6 45%,#FDFEFF 70%)"></div>
<div class="b" style="left:0;top:814.2px;width:1600px;height:34.6px;border-top:1px solid #AEBFD8;background:linear-gradient(#D9E5F4,#D2E0F1 35%,#BFD0E6 75%,#B4C6DE)"></div>
<div class="b" style="left:108.6px;top:816px;width:1px;height:32px;background:#A3B6D0"></div><div class="b" style="left:107.39999999999999px;top:816px;width:1.2px;height:32px;background:rgba(255,255,255,.45)"></div>
<div class="b" style="left:359.2px;top:816px;width:1px;height:32px;background:#A3B6D0"></div><div class="b" style="left:358.0px;top:816px;width:1.2px;height:32px;background:rgba(255,255,255,.45)"></div>
<div class="b" style="left:0;top:848.8px;width:1600px;height:3.2px;background:#1D2B3A"></div><div class="b" style="left:60px;top:848.8px;width:430px;height:3.2px;background:#FBFBFB"></div><div class="b" style="left:1050px;top:848.8px;width:62px;height:3.2px;background:#5A6673"></div>
<span class="t" id="t0" style="left:683.00px;top:9.20px;font:15.5px/20px 'Liberation Sans', sans-serif;color:#37496F;transform:scaleX(0.8691);">SPC-LINKING</span>
<span class="t" id="t1" style="left:775.00px;top:9.70px;font:14.8px/19px 'Liberation Sans', sans-serif;color:#37496F;">模板</span>
<span class="t" id="t2" style="left:805.20px;top:9.20px;font:15.5px/20px 'Liberation Sans', sans-serif;color:#37496F;transform:scaleX(0.7884);">1</span>
<span class="t" id="t3" style="left:819.50px;top:9.20px;font:15.5px/20px 'Liberation Sans', sans-serif;color:#37496F;transform:scaleX(0.7927);">-</span>
<span class="t" id="t4" style="left:829.20px;top:9.20px;font:15.5px/20px 'Liberation Sans', sans-serif;color:#37496F;transform:scaleX(0.8702);">SPC-LINKING</span>
<span class="t" id="t5" style="left:86.20px;top:42.50px;font:16px/21px 'Liberation Sans', sans-serif;color:#37496F;transform:scaleX(0.9971);">Start</span>
<span class="t" id="t6" style="left:152.60px;top:43.00px;font:16px/21px 'Liberation Sans', sans-serif;color:#37496F;transform:scaleX(0.8499);">SPC-LINKING</span>
<span class="t" id="t7" style="left:272.00px;top:42.50px;font:16px/21px 'Liberation Sans', sans-serif;color:#37496F;transform:scaleX(1.1228);">[</span>
<span class="t" id="t8" style="left:277.50px;top:43.80px;font:15.1px/20px 'Liberation Sans', sans-serif;color:#37496F;letter-spacing:-0.250px;margin-left:-0.12px;">零件</span>
<span class="t" id="t9" style="left:307.50px;top:42.90px;font:16px/21px 'Liberation Sans', sans-serif;color:#37496F;transform:scaleX(1.2351);">/</span>
<span class="t" id="t10" style="left:313.50px;top:43.80px;font:15.1px/20px 'Liberation Sans', sans-serif;color:#37496F;letter-spacing:0.125px;margin-left:0.06px;">被测参数</span>
<span class="t" id="t11" style="left:376.00px;top:42.50px;font:16px/21px 'Liberation Sans', sans-serif;color:#37496F;transform:scaleX(1.1228);">]</span>
<span class="t" id="t12" style="left:413.50px;top:43.80px;font:15.1px/20px 'Liberation Sans', sans-serif;color:#37496F;letter-spacing:0.000px;margin-left:0.00px;">结果</span>
<span class="t" id="t13" style="left:12.70px;top:118.60px;font:16px/21px 'Liberation Sans', sans-serif;color:#37496F;transform:scaleX(0.8460);">SPC-LINKING</span>
<span class="t" id="t14" style="left:99.60px;top:119.20px;font:15.1px/20px 'Liberation Sans', sans-serif;color:#37496F;letter-spacing:0.000px;margin-left:0.00px;">选择</span>
<span class="t" id="t15" style="left:173.00px;top:119.40px;font:15.1px/20px 'Liberation Sans', sans-serif;color:#37496F;letter-spacing:0.100px;margin-left:0.05px;">配置</span>
<span class="t" id="t16" style="left:223.00px;top:118.40px;font:15.5px/20px 'Liberation Sans', sans-serif;color:#A4ADBC;transform:scaleX(1.1594);">[</span>
<span class="t" id="t17" style="left:229.00px;top:119.40px;font:15px/20px 'Liberation Sans', sans-serif;color:#A4ADBC;letter-spacing:-0.100px;margin-left:-0.05px;">保存</span>
<span class="t" id="t18" style="left:259.50px;top:118.40px;font:15.5px/20px 'Liberation Sans', sans-serif;color:#A4ADBC;transform:scaleX(1.0435);">]</span>
<span class="t" id="t19" style="left:333.00px;top:119.40px;font:15.1px/20px 'Liberation Sans', sans-serif;color:#37496F;letter-spacing:0.000px;margin-left:0.00px;">处理报警</span>
<span class="t" id="t20" style="left:14.20px;top:159.90px;font:16px/21px 'Liberation Sans', sans-serif;color:#50648A;transform:scaleX(0.8401);">SPC-LINKING</span>
<span class="t" id="t21" style="left:100.40px;top:160.40px;font:15.1px/20px 'Liberation Sans', sans-serif;color:#50648A;letter-spacing:-0.100px;margin-left:-0.05px;">选择</span>
<span class="t" id="t22" style="left:160.20px;top:159.90px;font:16px/21px 'Liberation Sans', sans-serif;color:#50648A;transform:scaleX(0.8440);">SPC-LINKING</span>
<span class="t" id="t23" style="left:246.80px;top:160.40px;font:15.1px/20px 'Liberation Sans', sans-serif;color:#50648A;letter-spacing:-0.100px;margin-left:-0.05px;">配置</span>
<span class="t" id="t24" style="left:306.40px;top:159.90px;font:16px/21px 'Liberation Sans', sans-serif;color:#50648A;transform:scaleX(0.8450);">SPC-LINKING</span>
<span class="t" id="t25" style="left:393.10px;top:160.40px;font:15.1px/20px 'Liberation Sans', sans-serif;color:#50648A;letter-spacing:-0.050px;margin-left:-0.03px;">报警</span>
<span class="t" id="t26" style="left:7.40px;top:194.20px;font:15px/20px 'Liberation Sans', sans-serif;color:#000;text-align:center;width:7px;">[</span>
<span class="t" id="t27" style="left:14.60px;top:196.00px;font:15.2px/20px 'Liberation Sans', sans-serif;color:#000;letter-spacing:-0.200px;margin-left:-0.10px;">零件号</span>
<span class="t" id="t28" style="left:60.20px;top:194.20px;font:15px/20px 'Liberation Sans', sans-serif;color:#000;text-align:center;width:7px;">]</span>
<span class="t" id="t29" style="left:411.00px;top:196.20px;font:15px/20px 'Liberation Serif', serif;color:#000;letter-spacing:0.188px;margin-left:0.09px;">T1001!</span>
<span class="t" id="t30" style="left:803.40px;top:194.20px;font:15px/20px 'Liberation Sans', sans-serif;color:#000;text-align:center;width:7px;">[</span>
<span class="t" id="t31" style="left:810.60px;top:196.00px;font:15.2px/20px 'Liberation Sans', sans-serif;color:#000;letter-spacing:0.500px;margin-left:0.25px;">零件名</span>
<span class="t" id="t32" style="left:858.30px;top:194.20px;font:15px/20px 'Liberation Sans', sans-serif;color:#000;text-align:center;width:7px;">]</span>
<span class="t" id="t33" style="left:1192.50px;top:196.60px;font:15px/20px 'Liberation Serif', serif;color:#000;letter-spacing:0.587px;margin-left:0.29px;">Transend.01</span>
<span class="t" id="t34" style="left:7.40px;top:233.80px;font:15px/20px 'Liberation Sans', sans-serif;color:#000;text-align:center;width:7px;">[</span>
<span class="t" id="t35" style="left:14.60px;top:235.60px;font:15.2px/20px 'Liberation Sans', sans-serif;color:#000;letter-spacing:0.050px;margin-left:0.03px;">被检参数编号</span>
<span class="t" id="t36" style="left:106.10px;top:233.80px;font:15px/20px 'Liberation Sans', sans-serif;color:#000;text-align:center;width:7px;">]</span>
<span class="t" id="t37" style="left:190.00px;top:236.00px;font:15px/20px 'Liberation Serif', serif;color:#000;letter-spacing:-0.200px;margin-left:-0.10px;">10</span>
<span class="t" id="t38" style="left:271.40px;top:233.80px;font:15px/20px 'Liberation Sans', sans-serif;color:#000;text-align:center;width:7px;">[</span>
<span class="t" id="t39" style="left:278.60px;top:235.60px;font:15.2px/20px 'Liberation Sans', sans-serif;color:#000;letter-spacing:0.183px;margin-left:0.09px;">被检参数名称</span>
<span class="t" id="t40" style="left:370.90px;top:233.80px;font:15px/20px 'Liberation Sans', sans-serif;color:#000;text-align:center;width:7px;">]</span>
<span class="t" id="t41" style="left:402.20px;top:235.80px;font:15px/20px 'Liberation Serif', serif;color:#000;letter-spacing:1.488px;margin-left:0.74px;">Testbeispiel 10</span>
<span class="t" id="t42" style="left:536.40px;top:233.80px;font:15px/20px 'Liberation Sans', sans-serif;color:#000;text-align:center;width:7px;">[</span>
<span class="t" id="t43" style="left:543.60px;top:235.60px;font:15.2px/20px 'Liberation Sans', sans-serif;color:#000;letter-spacing:0.550px;margin-left:0.27px;">上限</span>
<span class="t" id="t44" style="left:575.90px;top:233.80px;font:15px/20px 'Liberation Sans', sans-serif;color:#000;text-align:center;width:7px;">]</span>
<span class="t" id="t45" style="left:671.90px;top:236.00px;font:15px/20px 'Liberation Serif', serif;color:#000;letter-spacing:0.358px;margin-left:0.18px;">70.000</span>
<span class="t" id="t46" style="left:802.80px;top:233.80px;font:15px/20px 'Liberation Sans', sans-serif;color:#000;text-align:center;width:7px;">[</span>
<span class="t" id="t47" style="left:810.00px;top:235.60px;font:15.2px/20px 'Liberation Sans', sans-serif;color:#000;letter-spacing:-0.300px;margin-left:-0.15px;">下限</span>
<span class="t" id="t48" style="left:840.60px;top:233.80px;font:15px/20px 'Liberation Sans', sans-serif;color:#000;text-align:center;width:7px;">]</span>
<span class="t" id="t49" style="left:935.60px;top:236.00px;font:15px/20px 'Liberation Serif', serif;color:#000;letter-spacing:0.525px;margin-left:0.26px;">60.000</span>
<span class="t" id="t50" style="left:1067.40px;top:233.80px;font:15px/20px 'Liberation Sans', sans-serif;color:#000;text-align:center;width:7px;">[</span>
<span class="t" id="t51" style="left:1074.60px;top:235.60px;font:15.2px/20px 'Liberation Sans', sans-serif;color:#000;letter-spacing:-0.025px;margin-left:-0.01px;">附加常数</span>
<span class="t" id="t52" style="left:1142.00px;top:235.60px;font:15.2px/20px 'Liberation Sans', sans-serif;color:#000;letter-spacing:-0.200px;margin-left:-0.10px;">相对的</span>
<span class="t" id="t53" style="left:1187.60px;top:233.80px;font:15px/20px 'Liberation Sans', sans-serif;color:#000;text-align:center;width:7px;">]</span>
<span class="t" id="t54" style="left:1332.40px;top:233.80px;font:15px/20px 'Liberation Sans', sans-serif;color:#000;text-align:center;width:7px;">[</span>
<span class="t" id="t55" style="left:1339.60px;top:235.60px;font:15.2px/20px 'Liberation Sans', sans-serif;color:#000;letter-spacing:0.133px;margin-left:0.07px;">相对乘数因子</span>
<span class="t" id="t56" style="left:1431.60px;top:233.80px;font:15px/20px 'Liberation Sans', sans-serif;color:#000;text-align:center;width:7px;">]</span>
<span class="t" id="t57" style="left:12.00px;top:274.70px;font:15.4px/20px 'Liberation Sans', sans-serif;color:#999DAB;transform:scaleX(1.0132);">输入：测量值（零件：T1001！/被测参数：10/值：103）</span>
<span class="t" id="t58" style="left:1.40px;top:363.70px;font:15px/20px 'Liberation Sans', sans-serif;color:#1c2a44;text-align:center;width:7px;">[</span>
<span class="t" id="t59" style="left:8.60px;top:365.50px;font:15.2px/20px 'Liberation Sans', sans-serif;color:#1c2a44;letter-spacing:0.150px;margin-left:0.07px;">输入</span>
<span class="t" id="t60" style="left:40.10px;top:363.70px;font:15px/20px 'Liberation Sans', sans-serif;color:#1c2a44;text-align:center;width:7px;">]</span>
<span class="t" id="t61" style="left:7.70px;top:423.90px;font:16.2px/21px 'Liberation Sans', sans-serif;color:#7A1420;transform:scaleX(0.9587);">103</span>
<span class="t" id="t62" style="left:48.60px;top:423.90px;font:16.2px/21px 'Liberation Sans', sans-serif;color:#7A1420;transform:scaleX(1.0748);">1/5</span>
<span class="t" id="t63" style="left:143.20px;top:426.00px;font:14px/18px 'Liberation Sans', sans-serif;color:#7A1420;transform:scaleX(1.0286);">---</span>
<span class="t" id="t64" style="left:7.70px;top:481.10px;font:16.2px/21px 'Liberation Sans', sans-serif;color:#27365A;transform:scaleX(0.9587);">104</span>
<span class="t" id="t65" style="left:48.60px;top:481.10px;font:16.2px/21px 'Liberation Sans', sans-serif;color:#27365A;transform:scaleX(1.0748);">2/5</span>
<span class="t" id="t66" style="left:143.20px;top:483.20px;font:14px/18px 'Liberation Sans', sans-serif;color:#27365A;transform:scaleX(1.0286);">---</span>
<span class="t" id="t67" style="left:7.70px;top:538.50px;font:16.2px/21px 'Liberation Sans', sans-serif;color:#27365A;transform:scaleX(0.9587);">105</span>
<span class="t" id="t68" style="left:48.60px;top:538.50px;font:16.2px/21px 'Liberation Sans', sans-serif;color:#27365A;transform:scaleX(1.0748);">3/5</span>
<span class="t" id="t69" style="left:143.20px;top:540.60px;font:14px/18px 'Liberation Sans', sans-serif;color:#27365A;transform:scaleX(1.0286);">---</span>
<span class="t" id="t70" style="left:7.70px;top:595.90px;font:16.2px/21px 'Liberation Sans', sans-serif;color:#27365A;transform:scaleX(0.9587);">106</span>
<span class="t" id="t71" style="left:48.60px;top:595.90px;font:16.2px/21px 'Liberation Sans', sans-serif;color:#27365A;transform:scaleX(1.0748);">4/5</span>
<span class="t" id="t72" style="left:143.20px;top:598.00px;font:14px/18px 'Liberation Sans', sans-serif;color:#27365A;transform:scaleX(1.0286);">---</span>
<span class="t" id="t73" style="left:7.70px;top:653.30px;font:16.2px/21px 'Liberation Sans', sans-serif;color:#27365A;transform:scaleX(0.9587);">107</span>
<span class="t" id="t74" style="left:48.60px;top:653.30px;font:16.2px/21px 'Liberation Sans', sans-serif;color:#27365A;transform:scaleX(1.0748);">5/5</span>
<span class="t" id="t75" style="left:143.20px;top:655.40px;font:14px/18px 'Liberation Sans', sans-serif;color:#27365A;transform:scaleX(1.0286);">---</span>
<span class="t" id="t76" style="left:179.50px;top:717.00px;font:15px/20px 'Liberation Sans', sans-serif;color:#000;letter-spacing:0.000px;margin-left:0.00px;">未设置串口设备</span>
<span class="t" id="t77" style="left:139.00px;top:776.40px;font:15.5px/20px 'Liberation Sans', sans-serif;color:#35466A;transform:scaleX(1.1594);">[</span>
<span class="t" id="t78" style="left:145.00px;top:778.00px;font:14.8px/19px 'Liberation Sans', sans-serif;color:#35466A;">保存</span>
<span class="t" id="t79" style="left:176.00px;top:776.40px;font:15.5px/20px 'Liberation Sans', sans-serif;color:#35466A;transform:scaleX(1.1594);">]</span>
<span class="t" id="t80" style="left:457.50px;top:776.40px;font:15.5px/20px 'Liberation Sans', sans-serif;color:#35466A;transform:scaleX(1.1594);">[</span>
<span class="t" id="t81" style="left:463.50px;top:778.00px;font:14.8px/19px 'Liberation Sans', sans-serif;color:#35466A;">退出</span>
<span class="t" id="t82" style="left:494.50px;top:776.40px;font:15.5px/20px 'Liberation Sans', sans-serif;color:#35466A;transform:scaleX(1.1594);">]</span>
<span class="t" id="t83" style="left:738.50px;top:776.40px;font:15.5px/20px 'Liberation Sans', sans-serif;color:#35466A;transform:scaleX(1.1594);">[</span>
<span class="t" id="t84" style="left:744.50px;top:778.00px;font:14.9px/19px 'Liberation Sans', sans-serif;color:#35466A;letter-spacing:-0.071px;margin-left:-0.04px;">零件选择数据库</span>
<span class="t" id="t85" style="left:850.50px;top:776.40px;font:15.5px/20px 'Liberation Sans', sans-serif;color:#35466A;transform:scaleX(1.1594);">]</span>
<span class="t" id="t86" style="left:1085.50px;top:778.00px;font:14.9px/19px 'Liberation Sans', sans-serif;color:#35466A;">附加信息</span>
<span class="t" id="t87" style="left:1399.00px;top:776.40px;font:15.5px/20px 'Liberation Sans', sans-serif;color:#98A4B6;transform:scaleX(1.1594);">[</span>
<span class="t" id="t88" style="left:1405.00px;top:778.00px;font:14.8px/19px 'Liberation Sans', sans-serif;color:#98A4B6;">重复测量</span>
<span class="t" id="t89" style="left:1465.50px;top:776.40px;font:15.5px/20px 'Liberation Sans', sans-serif;color:#98A4B6;transform:scaleX(1.1594);">]</span>
<span class="t" id="t90" style="left:11.60px;top:822.90px;font:15px/20px 'Liberation Sans', sans-serif;color:#2A3B5E;font-weight:bold;text-align:right;width:13px;">【</span>
<span class="t" id="t91" style="left:26.30px;top:822.20px;font:16px/21px 'Liberation Sans', sans-serif;color:#2F4064;transform:scaleX(0.9968);">Ready</span>
<span class="t" id="t92" style="left:73.20px;top:822.90px;font:15px/20px 'Liberation Sans', sans-serif;color:#2A3B5E;font-weight:bold;text-align:left;width:13px;">】</span>
<span class="t" id="t93" style="left:124.20px;top:821.60px;font:16px/21px 'Liberation Sans', sans-serif;color:#2F4064;transform:scaleX(0.8725);">DS</span>
<span class="t" id="t94" style="left:535.80px;top:733.80px;font:11.5px/15px 'Liberation Mono', monospace;color:#333;transform:scaleX(0.8977);">9</span>
<span class="t" id="t95" style="left:652.50px;top:443.20px;font:14px/18px 'Liberation Sans', sans-serif;color:#2B3758;transform:scaleX(0.9596);">70.000</span>
<span class="t" id="t96" style="left:652.50px;top:478.63px;font:14px/18px 'Liberation Sans', sans-serif;color:#2B3758;transform:scaleX(0.9596);">68.500</span>
<span class="t" id="t97" style="left:652.50px;top:514.06px;font:14px/18px 'Liberation Sans', sans-serif;color:#2B3758;transform:scaleX(0.9596);">67.000</span>
<span class="t" id="t98" style="left:652.50px;top:549.49px;font:14px/18px 'Liberation Sans', sans-serif;color:#2B3758;transform:scaleX(0.9596);">65.500</span>
<span class="t" id="t99" style="left:652.50px;top:584.92px;font:14px/18px 'Liberation Sans', sans-serif;color:#2B3758;transform:scaleX(0.9596);">64.000</span>
<span class="t" id="t100" style="left:652.50px;top:620.35px;font:14px/18px 'Liberation Sans', sans-serif;color:#2B3758;transform:scaleX(0.9596);">62.500</span>
<span class="t" id="t101" style="left:652.50px;top:655.78px;font:14px/18px 'Liberation Sans', sans-serif;color:#2B3758;transform:scaleX(0.9596);">61.000</span>
<span class="t" id="t102" style="left:652.50px;top:691.21px;font:14px/18px 'Liberation Sans', sans-serif;color:#2B3758;transform:scaleX(0.9596);">59.500</span>
<span class="t" id="t103" style="left:720.55px;top:716.90px;font:14px/18px 'Liberation Sans', sans-serif;color:#2B3758;transform:scaleX(0.8850);">5</span>
<span class="t" id="t104" style="left:753.64px;top:716.90px;font:14px/18px 'Liberation Sans', sans-serif;color:#2B3758;transform:scaleX(0.9115);">15</span>
<span class="t" id="t105" style="left:790.38px;top:716.90px;font:14px/18px 'Liberation Sans', sans-serif;color:#2B3758;transform:scaleX(0.9115);">25</span>
<span class="t" id="t106" style="left:827.12px;top:716.90px;font:14px/18px 'Liberation Sans', sans-serif;color:#2B3758;transform:scaleX(0.9115);">35</span>
<span class="t" id="t107" style="left:863.86px;top:716.90px;font:14px/18px 'Liberation Sans', sans-serif;color:#2B3758;transform:scaleX(0.9115);">45</span>
<span class="t" id="t108" style="left:900.60px;top:716.90px;font:14px/18px 'Liberation Sans', sans-serif;color:#2B3758;transform:scaleX(0.9115);">55</span>
<span class="t" id="t109" style="left:937.34px;top:716.90px;font:14px/18px 'Liberation Sans', sans-serif;color:#2B3758;transform:scaleX(0.9115);">65</span>
<span class="t" id="t110" style="left:974.08px;top:716.90px;font:14px/18px 'Liberation Sans', sans-serif;color:#2B3758;transform:scaleX(0.9115);">75</span>
<span class="t" id="t111" style="left:1010.82px;top:716.90px;font:14px/18px 'Liberation Sans', sans-serif;color:#2B3758;transform:scaleX(0.9115);">85</span>
<span class="t" id="t112" style="left:1047.56px;top:716.90px;font:14px/18px 'Liberation Sans', sans-serif;color:#2B3758;transform:scaleX(0.9115);">95</span>
<span class="t" id="t113" style="left:1080.80px;top:716.90px;font:14px/18px 'Liberation Sans', sans-serif;color:#2B3758;transform:scaleX(0.9076);">105</span>
<span class="t" id="t114" style="left:1117.54px;top:716.90px;font:14px/18px 'Liberation Sans', sans-serif;color:#2B3758;transform:scaleX(0.9495);">115</span>
<span class="t" id="t115" style="left:1154.28px;top:716.90px;font:14px/18px 'Liberation Sans', sans-serif;color:#2B3758;transform:scaleX(0.9076);">125</span>
<span class="t" id="t116" style="left:735.17px;top:735.70px;font:14px/18px 'Liberation Sans', sans-serif;color:#2B3758;transform:scaleX(0.9244);">10</span>
<span class="t" id="t117" style="left:771.91px;top:735.70px;font:14px/18px 'Liberation Sans', sans-serif;color:#2B3758;transform:scaleX(0.9244);">20</span>
<span class="t" id="t118" style="left:808.65px;top:735.70px;font:14px/18px 'Liberation Sans', sans-serif;color:#2B3758;transform:scaleX(0.9244);">30</span>
<span class="t" id="t119" style="left:845.39px;top:735.70px;font:14px/18px 'Liberation Sans', sans-serif;color:#2B3758;transform:scaleX(0.9244);">40</span>
<span class="t" id="t120" style="left:882.13px;top:735.70px;font:14px/18px 'Liberation Sans', sans-serif;color:#2B3758;transform:scaleX(0.9244);">50</span>
<span class="t" id="t121" style="left:918.87px;top:735.70px;font:14px/18px 'Liberation Sans', sans-serif;color:#2B3758;transform:scaleX(0.9244);">60</span>
<span class="t" id="t122" style="left:955.61px;top:735.70px;font:14px/18px 'Liberation Sans', sans-serif;color:#2B3758;transform:scaleX(0.9244);">70</span>
<span class="t" id="t123" style="left:992.35px;top:735.70px;font:14px/18px 'Liberation Sans', sans-serif;color:#2B3758;transform:scaleX(0.9244);">80</span>
<span class="t" id="t124" style="left:1029.09px;top:735.70px;font:14px/18px 'Liberation Sans', sans-serif;color:#2B3758;transform:scaleX(0.9244);">90</span>
<span class="t" id="t125" style="left:1062.23px;top:735.70px;font:14px/18px 'Liberation Sans', sans-serif;color:#2B3758;transform:scaleX(0.9247);">100</span>
<span class="t" id="t126" style="left:1098.97px;top:735.70px;font:14px/18px 'Liberation Sans', sans-serif;color:#2B3758;transform:scaleX(0.9674);">110</span>
<span class="t" id="t127" style="left:1135.71px;top:735.70px;font:14px/18px 'Liberation Sans', sans-serif;color:#2B3758;transform:scaleX(0.9247);">120</span>
<span class="t" id="t128" style="left:1234.30px;top:687.40px;font:14px/18px 'Liberation Sans', sans-serif;color:#2B3758;transform:scaleX(0.8337);">0</span>
<span class="t" id="t129" style="left:1234.30px;top:652.16px;font:14px/18px 'Liberation Sans', sans-serif;color:#2B3758;transform:scaleX(0.8337);">3</span>
<span class="t" id="t130" style="left:1234.30px;top:616.93px;font:14px/18px 'Liberation Sans', sans-serif;color:#2B3758;transform:scaleX(0.8337);">6</span>
<span class="t" id="t131" style="left:1234.30px;top:581.69px;font:14px/18px 'Liberation Sans', sans-serif;color:#2B3758;transform:scaleX(0.8337);">9</span>
<span class="t" id="t132" style="left:1226.80px;top:546.46px;font:14px/18px 'Liberation Sans', sans-serif;color:#2B3758;transform:scaleX(0.8987);">12</span>
<span class="t" id="t133" style="left:1226.80px;top:511.23px;font:14px/18px 'Liberation Sans', sans-serif;color:#2B3758;transform:scaleX(0.8987);">15</span>
<span class="t" id="t134" style="left:1226.80px;top:475.99px;font:14px/18px 'Liberation Sans', sans-serif;color:#2B3758;transform:scaleX(0.8987);">18</span>
<span class="t" id="t135" style="left:1226.80px;top:440.75px;font:14px/18px 'Liberation Sans', sans-serif;color:#2B3758;transform:scaleX(0.8987);">21</span>
<span class="t" id="t136" style="left:1226.80px;top:405.52px;font:14px/18px 'Liberation Sans', sans-serif;color:#2B3758;transform:scaleX(0.8987);">24</span>
<span class="t" id="t137" style="left:1226.80px;top:370.29px;font:14px/18px 'Liberation Sans', sans-serif;color:#2B3758;transform:scaleX(0.8987);">27</span>
<span class="t" id="t138" style="left:1226.80px;top:335.05px;font:14px/18px 'Liberation Sans', sans-serif;color:#2B3758;transform:scaleX(0.8987);">30</span>
<span class="t" id="t139" style="left:1226.80px;top:299.81px;font:14px/18px 'Liberation Sans', sans-serif;color:#2B3758;transform:scaleX(0.8987);">33</span>
<span class="t" id="t140" style="left:1547.60px;top:687.40px;font:14px/18px 'Liberation Sans', sans-serif;color:#2B3758;transform:scaleX(0.8978);">0</span>
<span class="t" id="t141" style="left:1547.60px;top:618.23px;font:14px/18px 'Liberation Sans', sans-serif;color:#2B3758;transform:scaleX(0.8978);">1</span>
<span class="t" id="t142" style="left:1547.60px;top:549.06px;font:14px/18px 'Liberation Sans', sans-serif;color:#2B3758;transform:scaleX(0.8978);">2</span>
<span class="t" id="t143" style="left:1547.60px;top:479.89px;font:14px/18px 'Liberation Sans', sans-serif;color:#2B3758;transform:scaleX(0.8978);">3</span>
<span class="t" id="t144" style="left:1547.60px;top:410.72px;font:14px/18px 'Liberation Sans', sans-serif;color:#2B3758;transform:scaleX(0.8978);">4</span>
<span class="t" id="t145" style="left:1547.60px;top:341.55px;font:14px/18px 'Liberation Sans', sans-serif;color:#2B3758;transform:scaleX(0.8978);">5</span>
<span class="t" id="t146" style="left:1547.60px;top:272.38px;font:14px/18px 'Liberation Sans', sans-serif;color:#2B3758;transform:scaleX(0.8978);">6</span>
</body></html>
